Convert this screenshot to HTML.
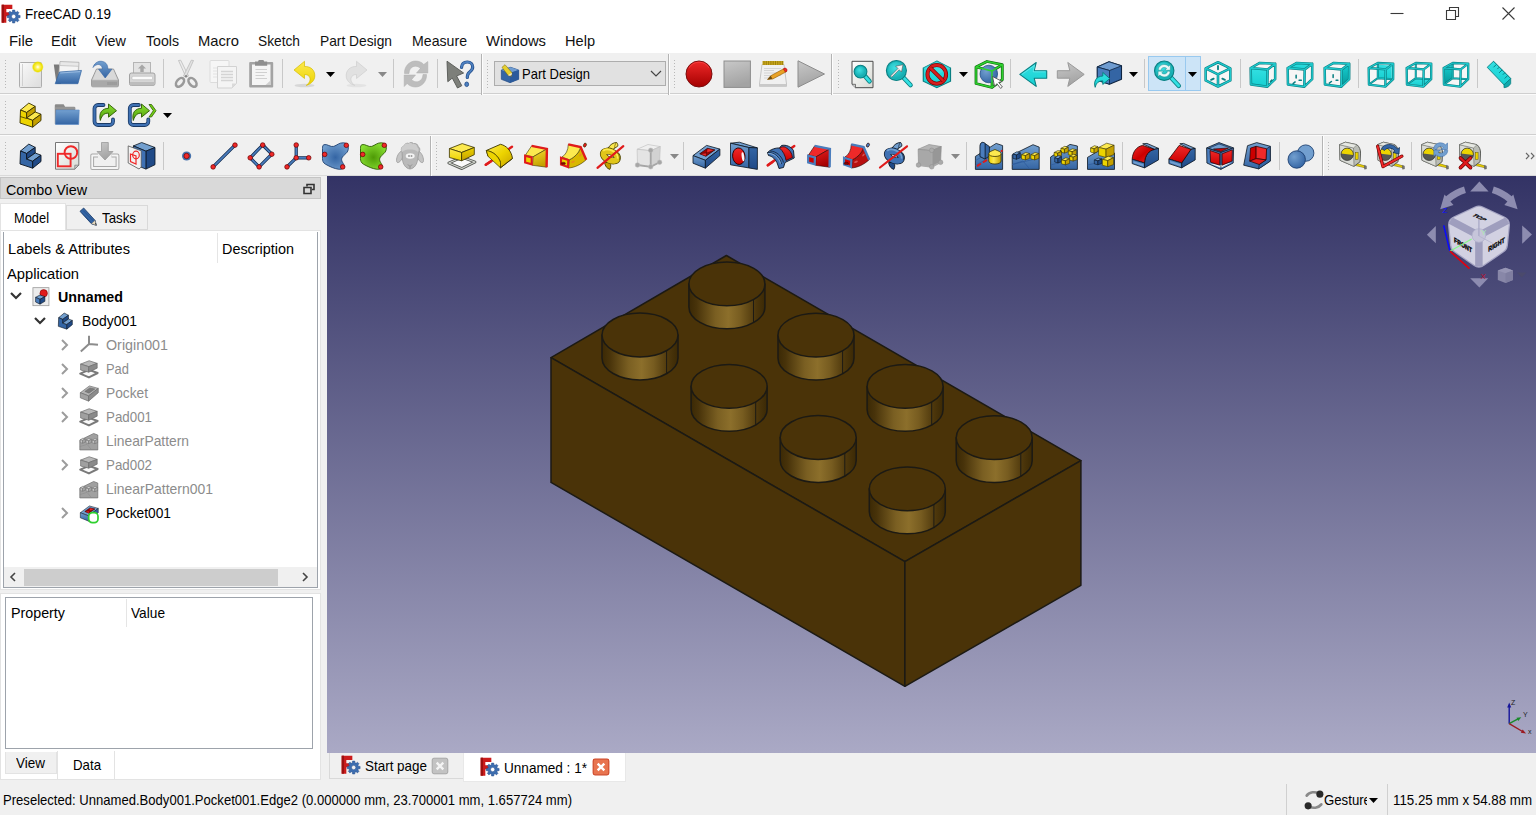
<!DOCTYPE html>
<html><head><meta charset="utf-8"><title>FreeCAD 0.19</title>
<style>
html,body{margin:0;padding:0}
body{width:1536px;height:815px;overflow:hidden;position:relative;background:#f0f0f0;font-family:"Liberation Sans", sans-serif;}
.t{position:absolute;white-space:nowrap;transform-origin:0 50%;}
.i{position:absolute;overflow:visible}
</style></head><body>
<svg width="0" height="0" style="position:absolute"><defs><linearGradient id="gB" x1="0" y1="0" x2="0" y2="1"><stop offset="0" stop-color="#729fcf"/><stop offset="1" stop-color="#3465a4"/></linearGradient><linearGradient id="gBd" x1="0" y1="0" x2="0" y2="1"><stop offset="0" stop-color="#3465a4"/><stop offset="1" stop-color="#204a87"/></linearGradient><linearGradient id="gBh" x1="0" y1="0" x2="1" y2="1"><stop offset="0" stop-color="#8fb4dc"/><stop offset="1" stop-color="#4a7ab8"/></linearGradient><linearGradient id="gY" x1="0" y1="0" x2="0" y2="1"><stop offset="0" stop-color="#fce94f"/><stop offset="1" stop-color="#edd400"/></linearGradient><linearGradient id="gYd" x1="0" y1="0" x2="0" y2="1"><stop offset="0" stop-color="#edd400"/><stop offset="1" stop-color="#c4a000"/></linearGradient><linearGradient id="gR" x1="0" y1="0" x2="0" y2="1"><stop offset="0" stop-color="#ef2929"/><stop offset="1" stop-color="#cc0000"/></linearGradient><linearGradient id="gRd" x1="0" y1="0" x2="0" y2="1"><stop offset="0" stop-color="#cc0000"/><stop offset="1" stop-color="#a40000"/></linearGradient><linearGradient id="gC" x1="0" y1="0" x2="0" y2="1"><stop offset="0" stop-color="#34e0e2"/><stop offset="1" stop-color="#16d0d2"/></linearGradient><linearGradient id="gCd" x1="0" y1="0" x2="0" y2="1"><stop offset="0" stop-color="#16d0d2"/><stop offset="1" stop-color="#06989a"/></linearGradient><linearGradient id="gG" x1="0" y1="0" x2="0" y2="1"><stop offset="0" stop-color="#8ae234"/><stop offset="1" stop-color="#4e9a06"/></linearGradient><linearGradient id="gGr" x1="0" y1="0" x2="0" y2="1"><stop offset="0" stop-color="#eeeeec"/><stop offset="1" stop-color="#babdb6"/></linearGradient><linearGradient id="gGrd" x1="0" y1="0" x2="0" y2="1"><stop offset="0" stop-color="#babdb6"/><stop offset="1" stop-color="#888a85"/></linearGradient><linearGradient id="gGrd2" x1="0" y1="0" x2="0.3" y2="1"><stop offset="0" stop-color="#c8c8c8"/><stop offset="1" stop-color="#a3a3a3"/></linearGradient><linearGradient id="gPap2" x1="0" y1="0" x2="1" y2="1"><stop offset="0" stop-color="#ffffff"/><stop offset="1" stop-color="#d8dad4"/></linearGradient><radialGradient id="gMag" cx="0.4" cy="0.35" r="0.7"><stop offset="0" stop-color="#3fe0e2"/><stop offset="1" stop-color="#12a8ac"/></radialGradient><linearGradient id="gYx" x1="0" y1="0" x2="1" y2="1"><stop offset="0" stop-color="#fce94f"/><stop offset="0.5" stop-color="#edd400"/><stop offset="1" stop-color="#c4a000"/></linearGradient><linearGradient id="gYh" x1="0" y1="0" x2="1" y2="0"><stop offset="0" stop-color="#edd400"/><stop offset="0.4" stop-color="#fce94f"/><stop offset="1" stop-color="#c4a000"/></linearGradient><linearGradient id="gRh" x1="0" y1="0" x2="1" y2="1"><stop offset="0" stop-color="#ef2929"/><stop offset="0.5" stop-color="#cc0000"/><stop offset="1" stop-color="#ef2929"/></linearGradient><linearGradient id="gY2" x1="0" y1="0" x2="0.3" y2="1"><stop offset="0" stop-color="#f6e030"/><stop offset="1" stop-color="#c4a000"/></linearGradient><linearGradient id="gR2" x1="0" y1="0" x2="0.3" y2="1"><stop offset="0" stop-color="#e82020"/><stop offset="1" stop-color="#a40000"/></linearGradient><linearGradient id="gPap" x1="0" y1="0" x2="1" y2="1"><stop offset="0" stop-color="#fafafa"/><stop offset="1" stop-color="#dcdcdc"/></linearGradient><linearGradient id="gRec" x1="0" y1="0" x2="0" y2="1"><stop offset="0" stop-color="#ef2929"/><stop offset="1" stop-color="#a40000"/></linearGradient><radialGradient id="gGlow" cx="0.5" cy="0.5" r="0.5"><stop offset="0" stop-color="#ffffff"/><stop offset="0.3" stop-color="#fff36b"/><stop offset="0.75" stop-color="#ece000"/><stop offset="1" stop-color="#e8dc00" stop-opacity="0"/></radialGradient><radialGradient id="gBall" cx="0.35" cy="0.35" r="0.7"><stop offset="0" stop-color="#729fcf"/><stop offset="1" stop-color="#3465a4"/></radialGradient><radialGradient id="gBlob" cx="0.5" cy="0.55" r="0.6"><stop offset="0" stop-color="#3465a4"/><stop offset="1" stop-color="#729fcf"/></radialGradient><radialGradient id="gBlobG" cx="0.5" cy="0.55" r="0.6"><stop offset="0" stop-color="#4e9a06"/><stop offset="1" stop-color="#8ae234"/></radialGradient></defs></svg>
<div style="position:absolute;left:0px;top:0px;width:1536px;height:53px;background:#fff;"></div>
<svg class="i" style="left:1.0px;top:4.0px" width="20" height="20" viewBox="0 0 30 30"><path d="M1 1h16v6.5H8v5h6.5v6H8V28H1z" fill="#cb1b1b"/><path d="M1 1h3.5v27H1z" fill="#9b1010"/><path d="M28.65 17.12L28.65 20.48L26.07 20.62L25.28 22.52L27.02 24.44L24.64 26.82L22.72 25.08L20.82 25.87L20.68 28.45L17.32 28.45L17.18 25.87L15.28 25.08L13.36 26.82L10.98 24.44L12.72 22.52L11.93 20.62L9.35 20.48L9.35 17.12L11.93 16.98L12.72 15.08L10.98 13.16L13.36 10.78L15.28 12.52L17.18 11.73L17.32 9.15L20.68 9.15L20.82 11.73L22.72 12.52L24.64 10.78L27.02 13.16L25.28 15.08L26.07 16.98zM15.70 18.80a3.3 3.3 0 1 0 6.6 0a3.3 3.3 0 1 0 -6.6 0z" fill="#3d6eb0" fill-rule="evenodd" stroke="#27508c" stroke-width=".8"/></svg>
<div class="t" style="left:25px;top:4.0px;height:20px;line-height:20px;font-size:15px;color:#000;transform:scaleX(0.8970);">FreeCAD 0.19</div>
<svg class="i" style="left:1380px;top:0" width="156" height="28" viewBox="0 0 156 28"><g stroke="#3a3a3a" stroke-width="1.1" fill="none"><path d="M10.5 13.5h13"/><path d="M66.5 10.5h9v9h-9z"/><path d="M69.5 10.5v-3h9v9h-3"/><path d="M122.5 7.5l12 12M134.5 7.5l-12 12"/></g></svg>
<div class="t" style="left:9px;top:30.5px;height:20px;line-height:20px;font-size:15px;color:#111;transform:scaleX(0.9929);">File</div>
<div class="t" style="left:51px;top:30.5px;height:20px;line-height:20px;font-size:15px;color:#111;transform:scaleX(0.9668);">Edit</div>
<div class="t" style="left:95px;top:30.5px;height:20px;line-height:20px;font-size:15px;color:#111;transform:scaleX(0.9612);">View</div>
<div class="t" style="left:146px;top:30.5px;height:20px;line-height:20px;font-size:15px;color:#111;transform:scaleX(0.9420);">Tools</div>
<div class="t" style="left:198px;top:30.5px;height:20px;line-height:20px;font-size:15px;color:#111;transform:scaleX(0.9835);">Macro</div>
<div class="t" style="left:258px;top:30.5px;height:20px;line-height:20px;font-size:15px;color:#111;transform:scaleX(0.9158);">Sketch</div>
<div class="t" style="left:320px;top:30.5px;height:20px;line-height:20px;font-size:15px;color:#111;transform:scaleX(0.9187);">Part Design</div>
<div class="t" style="left:412px;top:30.5px;height:20px;line-height:20px;font-size:15px;color:#111;transform:scaleX(0.9424);">Measure</div>
<div class="t" style="left:486px;top:30.5px;height:20px;line-height:20px;font-size:15px;color:#111;transform:scaleX(0.9859);">Windows</div>
<div class="t" style="left:565px;top:30.5px;height:20px;line-height:20px;font-size:15px;color:#111;transform:scaleX(0.9722);">Help</div>
<div style="position:absolute;left:0px;top:53px;width:1536px;height:124px;background:#f0f0f0;"></div>
<div style="position:absolute;left:0px;top:93px;width:1536px;height:1px;background:#cfcfcf;"></div>
<div style="position:absolute;left:0px;top:94px;width:1536px;height:1px;background:#fbfbfb;"></div>
<div style="position:absolute;left:0px;top:134px;width:1536px;height:1px;background:#cfcfcf;"></div>
<div style="position:absolute;left:0px;top:135px;width:1536px;height:1px;background:#fbfbfb;"></div>
<div style="position:absolute;left:0px;top:175px;width:1536px;height:1px;background:#dadada;"></div>
<div style="position:absolute;left:5px;top:60px;width:1px;height:28px;background:repeating-linear-gradient(#b8b8b8 0 1px,transparent 1px 3px)"></div>
<svg class="i" style="left:15.0px;top:59.0px" width="30" height="30" viewBox="0 0 30 30"><rect x="4.5" y="3.5" width="22" height="25" rx="1" fill="url(#gPap)" stroke="#adadad"/><path d="M7.5 5v22" stroke="#c8c8c8" stroke-width=".8"/><circle cx="22.8" cy="8" r="6" fill="url(#gGlow)"/></svg>
<svg class="i" style="left:52.0px;top:59.0px" width="30" height="30" viewBox="0 0 30 30"><path d="M1.8 5.5h5l1 1.5h3L9 25H4.5z" fill="#7a7a7a"/><path d="M8 2.5l19 .8-.5 10L7 15z" fill="#e8e8e8" stroke="#a8a8a8" stroke-width=".7"/><path d="M7.5 6.5l19 .8-.5 8L7 17z" fill="#f4f4f4" stroke="#b0b0b0" stroke-width=".6"/><path d="M7.5 13l22-1.6-3.6 13.3H3.2z" fill="url(#gB)" stroke="#3465a4" stroke-width=".7"/><path d="M8.2 14l20-1.4" stroke="#a5c3e6" stroke-width=".8"/></svg>
<svg class="i" style="left:90.0px;top:59.0px" width="30" height="30" viewBox="0 0 30 30"><path d="M6.5 10h17l5 11v5.5a1.3 1.3 0 0 1-1.3 1.3H2.8a1.3 1.3 0 0 1-1.3-1.3V21z" fill="#c9c9c9" stroke="#8b8b8b" stroke-width=".8"/><path d="M1.8 21.3h26.4v5.2a1 1 0 0 1-1 1H2.8a1 1 0 0 1-1-1z" fill="#a9a9a9"/><path d="M18 23v3M20 23v3M22 23v3M24 23v3M26 23v3" stroke="#8a8a8a" stroke-width=".8"/><path d="M6.8 10.8h16.4l4 9.6H2.8z" fill="#d9d9d9"/><path d="M3 8.5C4.5 3 10 .8 14.5 3.2c2.4 1.3 3.3 3.6 3.4 7h4L15.2 19 8.6 10.2h3.8c0-3-2.3-5.2-5-4.6C5.4 6 4 7 3 8.5z" fill="url(#gB)" stroke="#3465a4" stroke-width=".6"/></svg>
<svg class="i" style="left:127.0px;top:59.0px" width="30" height="30" viewBox="0 0 30 30"><rect x="6.5" y="3.5" width="17" height="12" fill="#e3e3e3" stroke="#b5b5b5"/><path d="M15 5.5l4 4h-2.3v3.5h-3.4V9.5H11z" fill="#a6a6a6"/><rect x="2.5" y="14" width="25.5" height="12.5" rx="2" fill="#d6d6d6" stroke="#a2a2a2"/><rect x="5" y="17.3" width="20.5" height="3.4" rx="1" fill="#fafafa" stroke="#b9b9b9" stroke-width=".6"/><path d="M3 23h24.5v2a1.5 1.5 0 0 1-1.5 1.5H4.5A1.500 1.500 0 0 1 3 25z" fill="#bdbdbd"/></svg>
<div style="position:absolute;left:163px;top:59px;width:1px;height:29px;background:#c8c8c8;"></div>
<svg class="i" style="left:171.0px;top:59.0px" width="30" height="30" viewBox="0 0 30 30"><path d="M7.5 1.5l2.2-.3L17.5 17l-2.6 1z" fill="#ececec" stroke="#b5b5b5" stroke-width=".7"/><path d="M22.5 1.500l-2.200-.3L12.500 17l2.600 1z" fill="#e2e2e2" stroke="#b5b5b5" stroke-width=".7"/><g fill="none" stroke="#9a9a9a" stroke-width="2.6"><ellipse cx="9" cy="23.300" rx="3.200" ry="5" transform="rotate(40 9 23.300)"/><ellipse cx="21.500" cy="23.300" rx="3.200" ry="5" transform="rotate(-40 21.500 23.300)"/></g><circle cx="15" cy="17.300" r="1.200" fill="#888"/></svg>
<svg class="i" style="left:209.0px;top:59.0px" width="30" height="30" viewBox="0 0 30 30"><rect x="1" y="1.500" width="19" height="22" rx="1" fill="#f6f6f6" stroke="#dcdcdc"/><path d="M4 9h8M4 12h8M4 15h8M4 18h8" stroke="#e2e2e2" stroke-width="1"/><path d="M8.500 7.500h19v17l-4.500 4.500H8.500z" fill="#f4f4f4" stroke="#d2d2d2"/><path d="M12 12.500h12M12 15.500h12M12 18.500h12M12 21.500h12" stroke="#d4d4d4" stroke-width="1.300"/><path d="M27.500 24.500h-4.500v4.500z" fill="#dadada"/></svg>
<svg class="i" style="left:246.0px;top:59.0px" width="30" height="30" viewBox="0 0 30 30"><rect x="3.200" y="3" width="24" height="25.500" rx="1" fill="#a3a3a3"/><rect x="6" y="5.500" width="18.500" height="20.500" fill="#f5f5f5"/><path d="M9 2.500h3l.8-1.500h4.600l.8 1.500h3v4.300H9z" fill="#8f8f8f"/><path d="M9.500 10.500h11.500M9.500 13.500h11.500M9.500 16.500h9M9.500 19.500h11.500" stroke="#d0d0d0" stroke-width="1.200"/><path d="M24.500 21.500v4.500h-5z" fill="#cfcfcf"/></svg>
<div style="position:absolute;left:282px;top:59px;width:1px;height:29px;background:#c8c8c8;"></div>
<svg class="i" style="left:289.0px;top:59.0px" width="30" height="30" viewBox="0 0 30 30"><ellipse cx="15.500" cy="26.500" rx="10" ry="1.800" fill="#000" opacity=".10"/><path d="M5 11L15.500 2.300v5.200c6.500-.3 10.500 4 10.300 9.500-.2 4.500-3.300 7.700-8.500 9.400 3.300-2.600 4.300-5.300 3.600-7.600-.7-2.200-2.700-3.300-5.400-3.300v4z" fill="url(#gY)" stroke="#d4bc00" stroke-width=".7"/></svg>
<svg class="i" style="left:325.5px;top:71.5px" width="9" height="5" viewBox="0 0 9 5"><path d="M0 0h9L4.5 5z" fill="#000"/></svg>
<svg class="i" style="left:342.0px;top:59.0px" width="30" height="30" viewBox="0 0 30 30"><ellipse cx="14.500" cy="26.500" rx="10" ry="1.800" fill="#000" opacity=".05"/><path d="M25 11L14.500 2.300v5.200C8 7.200 4 11.500 4.200 17c.2 4.500 3.300 7.700 8.500 9.400-3.300-2.600-4.300-5.300-3.600-7.600.7-2.200 2.700-3.300 5.400-3.300v4z" fill="#e1e1e1" stroke="#cfcfcf" stroke-width=".7"/></svg>
<svg class="i" style="left:377.5px;top:71.5px" width="9" height="5" viewBox="0 0 9 5"><path d="M0 0h9L4.5 5z" fill="#888"/></svg>
<div style="position:absolute;left:393px;top:59px;width:1px;height:29px;background:#c8c8c8;"></div>
<svg class="i" style="left:400.0px;top:59.0px" width="30" height="30" viewBox="0 0 30 30"><g fill="#bdbdbd" stroke="#adadad" stroke-width=".5"><path d="M4.5 14.500C4 8 9 2 15.500 2c3.500 0 6.300 1.300 8.300 3.500L27.800 2.500v11.500H16.500l3.800-4.500c-1.200-1.500-2.800-2.300-4.800-2.300-3.800 0-6.200 3-6.500 7.300z"/><path d="M26.500 15.500C27 22 22 28 15.500 28c-3.500 0-6.300-1.300-8.300-3.500L4.200 27.500V16h11.300l-3.800 4.500c1.200 1.500 2.800 2.300 4.800 2.300 3.800 0 6.200-3 6.500-7.300z"/></g></svg>
<div style="position:absolute;left:437px;top:59px;width:1px;height:29px;background:#c8c8c8;"></div>
<svg class="i" style="left:444.0px;top:59.0px" width="30" height="30" viewBox="0 0 30 30"><path d="M3 2.200l.8 20.500 4.500-3.600L13.500 29l4.300-2.300-5.200-9.700 7-3z" fill="#7d7f7a" stroke="#555753" stroke-width=".9" stroke-linejoin="round"/><path d="M17.500 8.500c.3-3.500 2.500-5.500 5.800-5.500 3.200 0 5.400 2 5.400 5 0 2.500-1.400 3.800-3 5-1.600 1.200-2.400 2.300-2.400 5.500" fill="none" stroke="#204a87" stroke-width="3.200" stroke-linecap="round"/><path d="M17.500 8.500c.3-3.500 2.500-5.500 5.800-5.500 3.200 0 5.400 2 5.400 5 0 2.500-1.400 3.800-3 5-1.600 1.200-2.400 2.300-2.400 5.500" fill="none" stroke="#4d80c0" stroke-width="1.800" stroke-linecap="round"/><ellipse cx="22.700" cy="25.300" rx="1.900" ry="2.300" fill="#4d80c0" stroke="#204a87" stroke-width=".8"/></svg>
<div style="position:absolute;left:481px;top:54px;width:1px;height:41px;background:#b4b4b4;"></div>
<div style="position:absolute;left:482px;top:54px;width:1px;height:41px;background:#fdfdfd;"></div>
<div style="position:absolute;left:487px;top:60px;width:1px;height:28px;background:repeating-linear-gradient(#b8b8b8 0 1px,transparent 1px 3px)"></div>
<div style="position:absolute;left:494px;top:61px;width:172px;height:25px;background:#e1e1e1;border:1px solid #adadad;box-sizing:border-box"></div>
<svg class="i" style="left:499.5px;top:63.5px" width="20" height="20" viewBox="0 0 30 30"><path d="M2 9l14-4 12 4v14l-13 5-13-5z" fill="#3465a4" stroke="#1d4580" stroke-width="1"/><path d="M2 9l13 4.500 13-4.500-12-4z" fill="#6f9cd0"/><path d="M15 13.500V28l13-5V9z" fill="#2a5a9c"/><path d="M3 5l4.500-4L18 13l-1 5.500-5-1.500z" fill="#e6cf2e" stroke="#7a6a00" stroke-width=".8"/><path d="M12 17l5 1.500 1-5.500z" fill="#f3ead0"/><path d="M15.500 17.800l1.500.7.400-2z" fill="#222"/></svg>
<div class="t" style="left:522px;top:64.0px;height:20px;line-height:20px;font-size:15px;color:#000;transform:scaleX(0.8676);">Part Design</div>
<svg class="i" style="left:650px;top:70px" width="12" height="7" viewBox="0 0 12 7"><path d="M1 1l5 5 5-5" stroke="#444" stroke-width="1.2" fill="none"/></svg>
<div style="position:absolute;left:668px;top:54px;width:1px;height:41px;background:#b4b4b4;"></div>
<div style="position:absolute;left:669px;top:54px;width:1px;height:41px;background:#fdfdfd;"></div>
<div style="position:absolute;left:674px;top:60px;width:1px;height:28px;background:repeating-linear-gradient(#b8b8b8 0 1px,transparent 1px 3px)"></div>
<svg class="i" style="left:684.0px;top:59.0px" width="30" height="30" viewBox="0 0 30 30"><circle cx="15" cy="15" r="13" fill="url(#gRec)" stroke="#7a0d0d" stroke-width="1"/><path d="M5 9a11.500 11.500 0 0 1 20 0" stroke="#f55" stroke-width="1" fill="none" opacity=".5"/></svg>
<svg class="i" style="left:722.0px;top:59.0px" width="30" height="30" viewBox="0 0 30 30"><rect x="2" y="2" width="26.400" height="26.400" fill="url(#gGrd2)" stroke="#8d8d8d" stroke-width="1"/></svg>
<svg class="i" style="left:758.0px;top:59.0px" width="30" height="30" viewBox="0 0 30 30"><path d="M4 5.500h22l2.500 19.500v2.300H1.500V25z" fill="#f0f0f0" stroke="#b9b9b9" stroke-width=".8"/><path d="M1.500 25h27v2.300h-27z" fill="#c9c9c9"/><path d="M4.500 2h21v4h-21z" fill="#c9a820"/><path d="M6 2v4M8.300 2v4M10.600 2v4M12.900 2v4M15.200 2v4M17.500 2v4M19.800 2v4M22.100 2v4M24.400 2v4" stroke="#8a7000" stroke-width=".7"/><path d="M6 9.500h17M6 11.500h10M6 14h17M6 16.500h17M6 19h10" stroke="#d0d0d0" stroke-width=".9"/><path d="M9.500 20.500l3.200-3.700 14-7.600 2 3.300-14 7.500z" fill="#e9a227" stroke="#8f5902" stroke-width=".6"/><path d="M25.800 9.700a1.900 1.900 0 0 1 2.700 2.700l-1.200.7-2-3.300z" fill="#ef2929" stroke="#a40000" stroke-width=".5"/><path d="M9.500 20.500l3.200-3.700 1.700 3z" fill="#6b4a12"/></svg>
<svg class="i" style="left:796.0px;top:59.0px" width="30" height="30" viewBox="0 0 30 30"><path d="M2 1.800L28.500 15 2 28.200z" fill="url(#gGrd2)" stroke="#8d8d8d" stroke-width="1" stroke-linejoin="round"/></svg>
<div style="position:absolute;left:831px;top:54px;width:1px;height:41px;background:#b4b4b4;"></div>
<div style="position:absolute;left:832px;top:54px;width:1px;height:41px;background:#fdfdfd;"></div>
<div style="position:absolute;left:838px;top:60px;width:1px;height:28px;background:repeating-linear-gradient(#b8b8b8 0 1px,transparent 1px 3px)"></div>
<svg class="i" style="left:847.0px;top:59.0px" width="30" height="30" viewBox="0 0 30 30"><path d="M5 2.300h21v26.400H8.500L5 25.300z" fill="url(#gPap2)" stroke="#4a4a4a" stroke-width="1"/><path d="M5 25.300h3.500v3.400" fill="#ccc" stroke="#4a4a4a" stroke-width=".7"/><path d="M18.0 17.1L22.5 22.3" stroke="#0a7f82" stroke-width="4.600" stroke-linecap="round"/><path d="M18.0 17.1L22.5 22.3" stroke="#34e0e2" stroke-width="2.800" stroke-linecap="round"/><circle cx="13.5" cy="12.6" r="6.4" fill="#18b4b8" stroke="#0a7f82" stroke-width="1.100"/><circle cx="13.5" cy="12.6" r="4.800000000000001" fill="url(#gMag)"/></svg>
<svg class="i" style="left:885.0px;top:59.0px" width="30" height="30" viewBox="0 0 30 30"><path d="M18.4 18.5L25.5 26" stroke="#0a7f82" stroke-width="4.600" stroke-linecap="round"/><path d="M18.4 18.5L25.5 26" stroke="#34e0e2" stroke-width="2.800" stroke-linecap="round"/><circle cx="11.4" cy="11.5" r="10" fill="#18b4b8" stroke="#0a7f82" stroke-width="1.100"/><circle cx="11.4" cy="11.5" r="8.4" fill="url(#gMag)"/><path d="M5.500 17l7.500-7.500-2.300-2.300 7.300-1.500-1.500 7.300-2.300-2.300-7.500 7.500z" fill="#f4f4f4" stroke="#555" stroke-width=".6"/></svg>
<svg class="i" style="left:922.0px;top:59.0px" width="30" height="30" viewBox="0 0 30 30"><path d="M14.800 2.100L28.500 9v13.200L14.800 28.700 1.300 22.200V9z" fill="url(#gC)" stroke="#0a7f82" stroke-width="1.200"/><path d="M14.800 2.100L28.500 9 14.800 15.500 1.300 9z" fill="#4fe6e8" opacity=".55"/><circle cx="14.800" cy="15.400" r="9.300" fill="none" stroke="#7a0a0a" stroke-width="4"/><circle cx="14.800" cy="15.400" r="9.300" fill="none" stroke="#d81e1e" stroke-width="2.600"/><path d="M8.300 8.900l13 13" stroke="#7a0a0a" stroke-width="4"/><path d="M8.300 8.900l13 13" stroke="#d81e1e" stroke-width="2.600"/></svg>
<svg class="i" style="left:958.5px;top:71.5px" width="9" height="5" viewBox="0 0 9 5"><path d="M0 0h9L4.5 5z" fill="#000"/></svg>
<svg class="i" style="left:974.0px;top:59.0px" width="30" height="30" viewBox="0 0 30 30"><g fill="none" stroke="#0a6a0a" stroke-width="2.800" stroke-linejoin="round"><path d="M2 8l11-5.500 15.300 3.200v15L18 28.500 2 24.500z"/><path d="M2 8l16 4 10.300-6.300M18 12v16.500"/></g><circle cx="14.800" cy="15" r="8.800" fill="url(#gBall)" stroke="#1d4580" stroke-width=".7"/><g fill="none" stroke="#2fd02f" stroke-width="1.500" stroke-linejoin="round"><path d="M2 8l11-5.500 15.300 3.200v15L18 28.500 2 24.500z"/><path d="M2 8l16 4 10.300-6.300M18 12v16.500"/></g><path d="M18.500 17.500l9.800 5-3.600.9 3.700 4.600-1.800 1.400-3.700-4.700-2.300 2.800z" fill="#fff" stroke="#444" stroke-width=".8" stroke-linejoin="round"/></svg>
<div style="position:absolute;left:1010px;top:59px;width:1px;height:29px;background:#c8c8c8;"></div>
<svg class="i" style="left:1019.0px;top:59.0px" width="30" height="30" viewBox="0 0 30 30"><path d="M.8 15.400L17.200 3.500l-2 8.200h12.500v7.500H15.200l2 8.200z" fill="url(#gC)" stroke="#0a7f82" stroke-width="1.100" stroke-linejoin="round"/><path d="M3 15.400L15.500 6.300l-1.300 6.500h12.300" stroke="#7af0f2" stroke-width=".8" fill="none" opacity=".8"/></svg>
<svg class="i" style="left:1055.0px;top:59.0px" width="30" height="30" viewBox="0 0 30 30"><path d="M29.200 15.400L12.800 3.500l2 8.200H2.300v7.500h12.500l-2 8.200z" fill="url(#gGrd2)" stroke="#999" stroke-width="1" stroke-linejoin="round"/></svg>
<svg class="i" style="left:1093.0px;top:59.0px" width="30" height="30" viewBox="0 0 30 30"><path d="M4.300 8L16 2.800l12.500 4v13.500L16.500 25.200 4.300 21.300z" fill="#3465a4" stroke="#0f2440" stroke-width="1.100" stroke-linejoin="round"/><path d="M4.300 8L16 2.800l12.500 4L16.500 11.500z" fill="#6f9cd0" stroke="#0f2440" stroke-width=".8"/><path d="M4.300 8l12.200 3.500v13.700L4.300 21.300z" fill="#4a7dbd" stroke="#0f2440" stroke-width=".8"/><path d="M2.200 28.300C.3 22 3.500 17.300 9.800 17v-3.600l7 6.200-7 5.800v-3.500c-4-.2-6.600 2-7.600 6.400z" fill="url(#gC)" stroke="#0a7f82" stroke-width="1" stroke-linejoin="round"/></svg>
<svg class="i" style="left:1128.5px;top:71.5px" width="9" height="5" viewBox="0 0 9 5"><path d="M0 0h9L4.5 5z" fill="#000"/></svg>
<div style="position:absolute;left:1144px;top:59px;width:1px;height:29px;background:#c8c8c8;"></div>
<div style="position:absolute;left:1148px;top:56px;width:53px;height:35px;background:#cce4f7;border:1px solid #99c9ef;box-sizing:border-box"></div>
<div style="position:absolute;left:1185px;top:57px;width:1px;height:33px;background:#99c9ef;"></div>
<svg class="i" style="left:1152.0px;top:59.0px" width="30" height="30" viewBox="0 0 30 30"><path d="M19.0 18.5L26.7 26.8" stroke="#0a7f82" stroke-width="4.600" stroke-linecap="round"/><path d="M19.0 18.5L26.7 26.8" stroke="#34e0e2" stroke-width="2.800" stroke-linecap="round"/><circle cx="12.2" cy="11.7" r="9.7" fill="#18b4b8" stroke="#0a7f82" stroke-width="1.100"/><circle cx="12.2" cy="11.7" r="8.1" fill="url(#gMag)"/><g fill="#eaf8f8" stroke="#0a7f82" stroke-width=".4"><path d="M6.200 11C6.500 7.500 9 5.500 12.200 5.500c1.800 0 3.300.7 4.300 1.800l1.800-1.500v5.400h-5.400l1.800-1.800c-.7-.7-1.500-1-2.500-1-1.900 0-3.100 1.200-3.300 3z"/><path d="M18.200 12.400c-.3 3.500-2.800 5.500-6 5.500-1.800 0-3.300-.7-4.300-1.800l-1.800 1.500v-5.400h5.400l-1.800 1.800c.7.700 1.500 1 2.500 1 1.900 0 3.100-1.200 3.300-3z"/></g></svg>
<svg class="i" style="left:1187.5px;top:71.5px" width="9" height="5" viewBox="0 0 9 5"><path d="M0 0h9L4.5 5z" fill="#000"/></svg>
<svg class="i" style="left:1203.0px;top:59.0px" width="30" height="30" viewBox="0 0 30 30"><g transform="translate(15 15) scale(0.92) translate(-15 -15)"><path d="M15 2.200L28.400 8.800V22L15 28.600 1.600 22V8.800z" fill="#f6f6f6"/><path d="M15 2.200L28.400 8.800V22L15 28.600 1.600 22V8.800zM1.600 8.800L15 15.400 28.400 8.800M15 15.400v13.200" fill="none" stroke="#0a7f82" stroke-width="2.8" stroke-linejoin="round"/><path d="M15 2.200L28.400 8.800V22L15 28.600 1.600 22V8.800zM1.600 8.800L15 15.400 28.400 8.800M15 15.400v13.200" fill="none" stroke="#1fc8cc" stroke-width="1.4999999999999998" stroke-linejoin="round"/><g stroke="#0a7f82" stroke-width="2" stroke-linecap="round"><path d="M15 6.300v3.600M7.500 21.300l2.800-1.300M22.500 21.300l-2.800-1.300"/></g></g></svg>
<div style="position:absolute;left:1240px;top:59px;width:1px;height:29px;background:#c8c8c8;"></div>
<svg class="i" style="left:1248.0px;top:59.0px" width="30" height="30" viewBox="0 0 30 30"><g transform="translate(15 15.3) scale(0.9) translate(-15 -15)"><path d="M1.300 8L11.400 2.400 28.600 3.200 20.200 9.600z" fill="#f6f6f6"/><path d="M20.200 9.600L28.600 3.200 28.500 20.400 19.800 28.700z" fill="#f6f6f6"/><path d="M1.300 8L20.200 9.600 19.800 28.700 1.600 26.400z" fill="url(#gC)"/><path d="M1.300 8L20.200 9.600 19.800 28.700 1.600 26.400zM1.300 8L11.400 2.400 28.600 3.200 20.200 9.600zM20.200 9.600L28.600 3.200 28.500 20.400 19.800 28.700z" fill="none" stroke="#0a7f82" stroke-width="2.8" stroke-linejoin="round"/><path d="M1.300 8L20.200 9.600 19.800 28.700 1.600 26.400zM1.300 8L11.400 2.400 28.600 3.200 20.200 9.600zM20.200 9.600L28.600 3.200 28.500 20.400 19.800 28.700z" fill="none" stroke="#1fc8cc" stroke-width="1.4999999999999998" stroke-linejoin="round"/><g stroke="#0a7f82" stroke-width="1.700" stroke-linecap="round"><path d="M24.800 21.500l-1.500 1.500"/></g></g></svg>
<svg class="i" style="left:1285.0px;top:59.0px" width="30" height="30" viewBox="0 0 30 30"><g transform="translate(15 15.3) scale(0.9) translate(-15 -15)"><path d="M1.300 8L11.400 2.400 28.600 3.200 20.200 9.600z" fill="url(#gC)"/><path d="M20.200 9.600L28.600 3.200 28.500 20.400 19.800 28.700z" fill="#f6f6f6"/><path d="M1.300 8L20.200 9.600 19.800 28.700 1.600 26.400z" fill="#f6f6f6"/><path d="M1.300 8L20.200 9.600 19.800 28.700 1.600 26.400zM1.300 8L11.400 2.400 28.600 3.200 20.200 9.600zM20.200 9.600L28.600 3.200 28.500 20.400 19.800 28.700z" fill="none" stroke="#0a7f82" stroke-width="2.8" stroke-linejoin="round"/><path d="M1.300 8L20.200 9.600 19.800 28.700 1.600 26.400zM1.300 8L11.400 2.400 28.600 3.200 20.200 9.600zM20.200 9.600L28.600 3.200 28.500 20.400 19.800 28.700z" fill="none" stroke="#1fc8cc" stroke-width="1.4999999999999998" stroke-linejoin="round"/><g stroke="#0a7f82" stroke-width="1.700" stroke-linecap="round"><path d="M10.700 16v3M7.300 25.300l2.300-1.800M14 21.500h2.500"/></g></g></svg>
<svg class="i" style="left:1322.0px;top:59.0px" width="30" height="30" viewBox="0 0 30 30"><g transform="translate(15 15.3) scale(0.9) translate(-15 -15)"><path d="M1.300 8L11.400 2.400 28.600 3.200 20.200 9.600z" fill="#f6f6f6"/><path d="M20.200 9.600L28.600 3.200 28.500 20.400 19.800 28.700z" fill="url(#gCd)"/><path d="M1.300 8L20.200 9.600 19.800 28.700 1.600 26.400z" fill="#f6f6f6"/><path d="M1.300 8L20.200 9.600 19.800 28.700 1.600 26.400zM1.300 8L11.400 2.400 28.600 3.200 20.200 9.600zM20.200 9.600L28.600 3.200 28.500 20.400 19.800 28.700z" fill="none" stroke="#0a7f82" stroke-width="2.8" stroke-linejoin="round"/><path d="M1.300 8L20.200 9.600 19.800 28.700 1.600 26.400zM1.300 8L11.400 2.400 28.600 3.200 20.200 9.600zM20.200 9.600L28.600 3.200 28.500 20.400 19.800 28.700z" fill="none" stroke="#1fc8cc" stroke-width="1.4999999999999998" stroke-linejoin="round"/><g stroke="#0a7f82" stroke-width="1.700" stroke-linecap="round"><path d="M10.700 15.500v3M6.500 24.800l2.300-1.800M14 21.500h2"/></g></g></svg>
<div style="position:absolute;left:1358px;top:59px;width:1px;height:29px;background:#c8c8c8;"></div>
<svg class="i" style="left:1366.0px;top:59.0px" width="30" height="30" viewBox="0 0 30 30"><g transform="translate(15 15.3) scale(0.9) translate(-15 -15)"><path d="M1.300 8L20.200 9.600 19.800 28.700 1.600 26.400zM1.300 8L11.400 2.400 28.600 3.200 20.200 9.600zM20.200 9.600L28.600 3.200 28.500 20.400 19.800 28.700z" fill="#f6f6f6"/><path d="M11.400 4.500L27 5.200V20L11.400 19z" fill="url(#gC)"/><path d="M11.400 2.400V19.300L1.600 26.400M11.400 19.300L28.500 20.400" fill="none" stroke="#0a7f82" stroke-width="2.2" stroke-linejoin="round"/><path d="M11.400 2.400V19.300L1.600 26.400M11.400 19.300L28.500 20.400" fill="none" stroke="#1fc8cc" stroke-width="0.9000000000000001" stroke-linejoin="round"/><path d="M1.300 8L20.200 9.600 19.800 28.700 1.600 26.400zM1.300 8L11.400 2.400 28.600 3.200 20.200 9.600zM20.200 9.600L28.600 3.200 28.500 20.400 19.800 28.700z" fill="none" stroke="#0a7f82" stroke-width="2.6" stroke-linejoin="round"/><path d="M1.300 8L20.200 9.600 19.800 28.700 1.600 26.400zM1.300 8L11.400 2.400 28.600 3.200 20.200 9.600zM20.200 9.600L28.600 3.200 28.500 20.400 19.800 28.700z" fill="none" stroke="#1fc8cc" stroke-width="1.3" stroke-linejoin="round"/></g></svg>
<svg class="i" style="left:1404.0px;top:59.0px" width="30" height="30" viewBox="0 0 30 30"><g transform="translate(15 15.3) scale(0.9) translate(-15 -15)"><path d="M1.300 8L20.200 9.600 19.800 28.700 1.600 26.400zM1.300 8L11.400 2.400 28.600 3.200 20.200 9.600zM20.200 9.600L28.600 3.200 28.500 20.400 19.800 28.700z" fill="#f6f6f6"/><path d="M2.500 25.800L11.400 19.500 27.500 20.500 19.800 27.800z" fill="url(#gC)"/><path d="M11.400 2.400V19.300L1.600 26.400M11.400 19.300L28.500 20.400" fill="none" stroke="#0a7f82" stroke-width="2.2" stroke-linejoin="round"/><path d="M11.400 2.400V19.300L1.600 26.400M11.400 19.300L28.500 20.400" fill="none" stroke="#1fc8cc" stroke-width="0.9000000000000001" stroke-linejoin="round"/><path d="M1.300 8L20.200 9.600 19.800 28.700 1.600 26.400zM1.300 8L11.400 2.400 28.600 3.200 20.200 9.600zM20.200 9.600L28.600 3.200 28.500 20.400 19.800 28.700z" fill="none" stroke="#0a7f82" stroke-width="2.6" stroke-linejoin="round"/><path d="M1.300 8L20.200 9.600 19.800 28.700 1.600 26.400zM1.300 8L11.400 2.400 28.600 3.200 20.200 9.600zM20.200 9.600L28.600 3.200 28.500 20.400 19.800 28.700z" fill="none" stroke="#1fc8cc" stroke-width="1.3" stroke-linejoin="round"/></g></svg>
<svg class="i" style="left:1441.0px;top:59.0px" width="30" height="30" viewBox="0 0 30 30"><g transform="translate(15 15.3) scale(0.9) translate(-15 -15)"><path d="M1.300 8L20.200 9.600 19.800 28.700 1.600 26.400zM1.300 8L11.400 2.400 28.600 3.200 20.200 9.600zM20.200 9.600L28.600 3.200 28.500 20.400 19.800 28.700z" fill="#f6f6f6"/><path d="M2 8.500L11.400 3.500V19.500L2.300 25.800z" fill="url(#gCd)"/><path d="M11.400 2.400V19.300L1.600 26.400M11.400 19.300L28.500 20.400" fill="none" stroke="#0a7f82" stroke-width="2.2" stroke-linejoin="round"/><path d="M11.400 2.400V19.300L1.600 26.400M11.400 19.300L28.500 20.400" fill="none" stroke="#1fc8cc" stroke-width="0.9000000000000001" stroke-linejoin="round"/><path d="M1.300 8L20.200 9.600 19.800 28.700 1.600 26.400zM1.300 8L11.400 2.400 28.600 3.200 20.200 9.600zM20.200 9.600L28.600 3.200 28.500 20.400 19.800 28.700z" fill="none" stroke="#0a7f82" stroke-width="2.6" stroke-linejoin="round"/><path d="M1.300 8L20.200 9.600 19.800 28.700 1.600 26.400zM1.300 8L11.400 2.400 28.600 3.200 20.200 9.600zM20.200 9.600L28.600 3.200 28.500 20.400 19.800 28.700z" fill="none" stroke="#1fc8cc" stroke-width="1.3" stroke-linejoin="round"/></g></svg>
<div style="position:absolute;left:1477px;top:59px;width:1px;height:29px;background:#c8c8c8;"></div>
<svg class="i" style="left:1484.0px;top:59.0px" width="30" height="30" viewBox="0 0 30 30"><path d="M9.500 2.300L26.700 19.500V24.500C25.500 27 23 28.500 20 28.700V25.800z" fill="#10a8ac" stroke="#0a7f82" stroke-width=".8" stroke-linejoin="round"/><path d="M9.500 2.300L26.700 19.500 20 25.800 3.200 8.300z" fill="url(#gC)" stroke="#0a7f82" stroke-width=".9" stroke-linejoin="round"/><path d="M12.500 5.300l-3 3M15.300 8.100l-2 2M18.100 10.900l-3 3M20.900 13.700l-2 2M23.700 16.500l-3 3" stroke="#0a7f82" stroke-width="1"/></svg>
<div style="position:absolute;left:5px;top:101px;width:1px;height:28px;background:repeating-linear-gradient(#b8b8b8 0 1px,transparent 1px 3px)"></div>
<svg class="i" style="left:15.0px;top:100.0px" width="30" height="30" viewBox="0 0 30 30"><g stroke="#3a3200" stroke-width=".9" stroke-linejoin="round"><path d="M5.500 10L13.800 3.100 20.200 6.400 11.600 12.500z" fill="#fce94f"/><path d="M5.500 10L11.600 12.500V18L17.700 20.200V27.200L5 23z" fill="#edd400"/><path d="M11.600 12.500L20.200 6.400V12L11.600 18z" fill="#c4a000"/><path d="M11.600 18L20.200 12 26 14.200 17.700 20.200z" fill="#fce94f"/><path d="M17.700 20.200L26 14.200V20.500L17.700 27.200z" fill="#c4a000"/></g><path d="M5.200 16.500L11.600 18.500" stroke="#3a3200" stroke-width=".8"/></svg>
<svg class="i" style="left:51.0px;top:100.0px" width="30" height="30" viewBox="0 0 30 30"><path d="M3.800 5.500a1.300 1.300 0 0 1 1.300-1.300h7.500l1.500 2.500h9a1.200 1.200 0 0 1 1.200 1.200V24H3.800z" fill="#8a8a8a"/><path d="M3.800 8h20.500" stroke="#a5a5a5" stroke-width=".8"/><path d="M4.500 24.500l.5-14.500h23.200l-.5 14.500z" fill="url(#gB)" stroke="#5a8ac6" stroke-width=".6"/></svg>
<svg class="i" style="left:89.0px;top:100.0px" width="30" height="30" viewBox="0 0 30 30"><path d="M14.5 5H9a3.500 3.500 0 0 0-3.500 3.500V21.500a3.500 3.500 0 0 0 3.500 3.500H20.5a3.500 3.500 0 0 0 3.500-3.500V19.500" fill="none" stroke="#1a3a66" stroke-width="3.800" stroke-linecap="round"/><path d="M14.5 5H9a3.500 3.500 0 0 0-3.500 3.500V21.500a3.500 3.500 0 0 0 3.500 3.500H20.5a3.500 3.500 0 0 0 3.500-3.500V19.500" fill="none" stroke="#3f71b3" stroke-width="2.200" stroke-linecap="round"/><path d="M11.3 20.500C9.5 13 13 8.500 19.5 8.300V4l8 6.700-8 6.500v-4c-4-.2-6.500 1.800-8.200 7.300z" fill="url(#gG)" stroke="#2d5a00" stroke-width=".9" stroke-linejoin="round"/></svg>
<svg class="i" style="left:127.0px;top:100.0px" width="30" height="30" viewBox="0 0 30 30"><path d="M11.8 5H6.3a3.500 3.500 0 0 0-3.500 3.500V21.500a3.500 3.500 0 0 0 3.500 3.500H17.8a3.500 3.500 0 0 0 3.500-3.500V19.500" fill="none" stroke="#1a3a66" stroke-width="3.800" stroke-linecap="round"/><path d="M11.8 5H6.3a3.500 3.500 0 0 0-3.500 3.500V21.500a3.500 3.500 0 0 0 3.500 3.500H17.8a3.500 3.500 0 0 0 3.500-3.500V19.500" fill="none" stroke="#3f71b3" stroke-width="2.200" stroke-linecap="round"/><path d="M6.300000000000001 20.500C4.5 13 8 8.500 14.5 8.300V4l8 6.700-8 6.500v-4c-4-.2-6.500 1.800-8.200 7.300z" fill="url(#gG)" stroke="#2d5a00" stroke-width=".9" stroke-linejoin="round"/><path d="M22 4.500h2.500l4.500 6.200-4.500 6.300H22l4.300-6.300z" fill="#73d216" stroke="#2d5a00" stroke-width=".8" stroke-linejoin="round"/></svg>
<svg class="i" style="left:163.0px;top:112.5px" width="9" height="5" viewBox="0 0 9 5"><path d="M0 0h9L4.5 5z" fill="#000"/></svg>
<div style="position:absolute;left:5px;top:142px;width:1px;height:28px;background:repeating-linear-gradient(#b8b8b8 0 1px,transparent 1px 3px)"></div>
<svg class="i" style="left:15.0px;top:141.0px" width="30" height="30" viewBox="0 0 30 30"><g stroke="#0b1521" stroke-width=".9" stroke-linejoin="round"><path d="M5.500 10L13.800 3.100 20.200 6.400 11.600 12.500z" fill="#729fcf"/><path d="M5.500 10L11.600 12.500V18L17.700 20.200V27.200L5 23z" fill="#3465a4"/><path d="M11.600 12.500L20.200 6.400V12L11.600 18z" fill="#204a87"/><path d="M11.600 18L20.200 12 26 14.200 17.700 20.200z" fill="#729fcf"/><path d="M17.700 20.200L26 14.200V20.500L17.700 27.200z" fill="#204a87"/></g></svg>
<svg class="i" style="left:52.0px;top:141.0px" width="30" height="30" viewBox="0 0 30 30"><path d="M3.500 1.500h23.300v22.700l-4 4H3.500z" fill="url(#gPap2)" stroke="#777" stroke-width="1"/><path d="M26.800 24.200h-4v4z" fill="#c8c8c8" stroke="#777" stroke-width=".7"/><rect x="5.800" y="12.800" width="12.800" height="12.500" fill="none" stroke="#ef2929" stroke-width="1.900"/><circle cx="18.900" cy="11.500" r="6.300" fill="none" stroke="#ef2929" stroke-width="1.900"/></svg>
<svg class="i" style="left:90.0px;top:141.0px" width="30" height="30" viewBox="0 0 30 30"><path d="M8 14.500H2.200v12.500H27.500V14.500H21.500" fill="none" stroke="#a8a8a8" stroke-width="3.800" stroke-linejoin="round"/><path d="M8 14.500H2.200v12.500H27.500V14.500H21.500" fill="none" stroke="#f5f5f5" stroke-width="1.800" stroke-linejoin="round"/><path d="M11.500 1.500h6.800v9h4.700L15 19 7 10.500h4.500z" fill="url(#gGrd2)" stroke="#9a9a9a" stroke-width=".8" stroke-linejoin="round"/></svg>
<svg class="i" style="left:127.0px;top:141.0px" width="30" height="30" viewBox="0 0 30 30"><path d="M6.400 4.900L14.700 1.500 28 6.500 18.900 10.200z" fill="#729fcf" stroke="#0b1521" stroke-width=".8" stroke-linejoin="round"/><path d="M18.900 10.200L28 6.500V23.700L18.900 28.100z" fill="#204a87" stroke="#0b1521" stroke-width=".8" stroke-linejoin="round"/><path d="M6.400 4.900L18.900 10.200V28.100L6.400 23z" fill="#3f71b3" stroke="#0b1521" stroke-width=".8" stroke-linejoin="round"/><path d="M1.200 4.900L14.200 9.800V26L12 28 1.200 22z" fill="#f2f2f2" stroke="#555" stroke-width=".8" stroke-linejoin="round"/><path d="M3.500 13l5.500 2v8l-5.500-2.500z" fill="none" stroke="#ef2929" stroke-width="1.200"/><ellipse cx="9" cy="14" rx="3.300" ry="3.800" fill="none" stroke="#ef2929" stroke-width="1.200"/></svg>
<div style="position:absolute;left:163px;top:142px;width:1px;height:28px;background:#c8c8c8;"></div>
<svg class="i" style="left:172.0px;top:141.0px" width="30" height="30" viewBox="0 0 30 30"><circle cx="14.600" cy="15" r="4.600" fill="#3465a4" opacity=".9"/><circle cx="14.6" cy="15" r="2.7" fill="#ef2929" stroke="#6a0000" stroke-width=".7"/></svg>
<svg class="i" style="left:208.5px;top:141.0px" width="30" height="30" viewBox="0 0 30 30"><path d="M4.100 25.900L26 4.100" fill="none" stroke="#0f2a50" stroke-width="3.200" stroke-linecap="round" stroke-linejoin="round"/><path d="M4.100 25.900L26 4.100" fill="none" stroke="#4a7dbd" stroke-width="1.700" stroke-linecap="round" stroke-linejoin="round"/><circle cx="4.1" cy="25.9" r="2.3" fill="#ef2929" stroke="#6a0000" stroke-width=".7"/><circle cx="26" cy="4.1" r="2.3" fill="#ef2929" stroke="#6a0000" stroke-width=".7"/></svg>
<svg class="i" style="left:246.0px;top:141.0px" width="30" height="30" viewBox="0 0 30 30"><path d="M16.700 4L25.800 13.200 13.100 25.900 4.200 16.800z" fill="none" stroke="#0f2a50" stroke-width="3.200" stroke-linecap="round" stroke-linejoin="round"/><path d="M16.700 4L25.800 13.200 13.100 25.900 4.200 16.800z" fill="none" stroke="#4a7dbd" stroke-width="1.700" stroke-linecap="round" stroke-linejoin="round"/><circle cx="16.7" cy="4" r="2.3" fill="#ef2929" stroke="#6a0000" stroke-width=".7"/><circle cx="25.8" cy="13.2" r="2.3" fill="#ef2929" stroke="#6a0000" stroke-width=".7"/><circle cx="13.1" cy="25.9" r="2.3" fill="#ef2929" stroke="#6a0000" stroke-width=".7"/><circle cx="4.2" cy="16.8" r="2.3" fill="#ef2929" stroke="#6a0000" stroke-width=".7"/></svg>
<svg class="i" style="left:283.0px;top:141.0px" width="30" height="30" viewBox="0 0 30 30"><path d="M13.200 4V16.800H25.700M13.200 16.800L4 25.900" fill="none" stroke="#0f2a50" stroke-width="3.200" stroke-linecap="round" stroke-linejoin="round"/><path d="M13.200 4V16.800H25.700M13.200 16.800L4 25.900" fill="none" stroke="#4a7dbd" stroke-width="1.700" stroke-linecap="round" stroke-linejoin="round"/><circle cx="13.2" cy="4" r="2.3" fill="#ef2929" stroke="#6a0000" stroke-width=".7"/><circle cx="25.7" cy="16.8" r="2.3" fill="#ef2929" stroke="#6a0000" stroke-width=".7"/><circle cx="4" cy="25.9" r="2.3" fill="#ef2929" stroke="#6a0000" stroke-width=".7"/><circle cx="13.2" cy="16.8" r="2.3" fill="#ef2929" stroke="#6a0000" stroke-width=".7"/></svg>
<svg class="i" style="left:320.0px;top:141.0px" width="30" height="30" viewBox="0 0 30 30"><path d="M3.900 3.700C7 2.500 10.500 6.500 13.800 5.400 17 4.300 19.500 1.500 23.500 1.800 27 2 28.800 4 28.200 8.500 27.600 13 21.500 14.500 21.600 18.500c.1 3 3.500 5 2.200 7.700-1 2-3.500 2.300-5.500 2-4-.6-8-2.300-12.800-5-2.500-1.500-3-3.500-3-5.700V7.500C2.500 5.500 2.700 4.200 3.900 3.700z" fill="url(#gBlob)" stroke="#1d3f70" stroke-width=".9"/><circle cx="26.3" cy="4.3" r="2.3" fill="#ef2929" stroke="#6a0000" stroke-width=".7"/><circle cx="4.7" cy="13.4" r="2.3" fill="#ef2929" stroke="#6a0000" stroke-width=".7"/><circle cx="22.7" cy="25.9" r="2.3" fill="#ef2929" stroke="#6a0000" stroke-width=".7"/></svg>
<svg class="i" style="left:357.5px;top:141.0px" width="30" height="30" viewBox="0 0 30 30"><path d="M3.900 3.700C7 2.500 10.500 6.500 13.800 5.400 17 4.300 19.500 1.500 23.500 1.800 27 2 28.800 4 28.200 8.500 27.600 13 21.500 14.500 21.600 18.500c.1 3 3.500 5 2.200 7.700-1 2-3.500 2.300-5.500 2-4-.6-8-2.300-12.800-5-2.500-1.500-3-3.500-3-5.700V7.500C2.500 5.500 2.700 4.200 3.900 3.700z" fill="url(#gBlobG)" stroke="#2d5a00" stroke-width=".9"/><circle cx="26.3" cy="4.3" r="2.3" fill="#ef2929" stroke="#6a0000" stroke-width=".7"/><circle cx="4.7" cy="13.4" r="2.3" fill="#ef2929" stroke="#6a0000" stroke-width=".7"/><circle cx="22.7" cy="25.9" r="2.3" fill="#ef2929" stroke="#6a0000" stroke-width=".7"/></svg>
<svg class="i" style="left:395.0px;top:141.0px" width="30" height="30" viewBox="0 0 30 30"><path d="M7.500 9.500C3.500 11 1.500 16 1.500 19.500c0 1.500.8 2.500 2 2 2-.8 3.500-3.500 4.500-6.500zM22.500 9.500c4 1.500 6 6.500 6 10 0 1.500-.8 2.500-2 2-2-.8-3.500-3.500-4.500-6.500z" fill="#c4c4c4" stroke="#9a9a9a" stroke-width=".8"/><path d="M7 11C5.500 8.500 6.500 5.500 9 5 9.500 2.800 12 1.500 14 2.500c1-1.300 3.500-1.300 4.500.2C21 2 23 3.500 23 5.500c2 1 2.500 3.500 1 5.500l-1.500 8c-.5 4-3 8.500-7.500 9-4.500-.5-7-5-7.500-9z" fill="#b9b9b9" stroke="#9a9a9a" stroke-width=".8"/><path d="M7 11c2-2 5-2.500 8-2.500s6 .5 8 2.500c1-2 .5-4-1-5-0-2-2-3.500-4.500-2.800-1-1.500-3.500-1.500-4.500-.2C11 2 9.500 3 9 5 6.500 5.500 5.500 8.500 7 11z" fill="#cdcdcd"/><ellipse cx="15.200" cy="15" rx="4.500" ry="2.700" fill="#f4f4f4"/><ellipse cx="14" cy="15" rx="1" ry=".8" fill="#777"/><ellipse cx="16.500" cy="15" rx="1" ry=".8" fill="#777"/><path d="M13 23.500l2 2 2-2M15 25.500v2" stroke="#8a8a8a" stroke-width=".9" fill="none"/></svg>
<div style="position:absolute;left:430px;top:136px;width:1px;height:40px;background:#b4b4b4;"></div>
<div style="position:absolute;left:431px;top:136px;width:1px;height:40px;background:#fdfdfd;"></div>
<div style="position:absolute;left:436px;top:142px;width:1px;height:28px;background:repeating-linear-gradient(#b8b8b8 0 1px,transparent 1px 3px)"></div>
<svg class="i" style="left:446.5px;top:141.0px" width="30" height="30" viewBox="0 0 30 30"><path d="M14.900 16.300L28 21 14.900 27.600 1.800 22z" fill="#fafafa" stroke="#555753" stroke-width="2.800" stroke-linejoin="round"/><path d="M14.900 16.300L28 21 14.900 27.600 1.800 22z" fill="none" stroke="#d3d7cf" stroke-width="1.100" stroke-linejoin="round"/><path d="M2.4 7.6L15.2 2.6L27.3 6.5L14.6 11.5z" fill="#fce94f" stroke="#3a3200" stroke-width="0.8" stroke-linejoin="round" /><path d="M2.4 7.6L14.6 11.5L14.6 19.8L2.4 16.5z" fill="url(#gY)" stroke="#3a3200" stroke-width="0.8" stroke-linejoin="round" /><path d="M14.6 11.5L27.3 6.5L27.3 13.7L14.6 19.8z" fill="url(#gYd)" stroke="#3a3200" stroke-width="0.8" stroke-linejoin="round" /></svg>
<svg class="i" style="left:484.0px;top:141.0px" width="30" height="30" viewBox="0 0 30 30"><path d="M1.8 23.8L28 5.8" stroke="#e01b1b" stroke-width="2.4" stroke-linecap="round" /><path d="M2.300 9.500L16.500 3.300C22.500 4.500 27.500 10 28.500 17.500L16.500 26.800C15 20.500 10 16.500 4 15.300z" fill="url(#gYx)" stroke="#3a3200" stroke-width=".9" stroke-linejoin="round"/><path d="M4 15.300C10 16.500 15 20.500 16.500 26.800L28.500 17.500" fill="none" stroke="#3a3200" stroke-width=".7"/><path d="M2.300 9.500C9 10.500 14.500 15 16.500 21.500" fill="none" stroke="#3a3200" stroke-width=".7"/><path d="M16.500 26.800L4 15.300 2.300 9.500C9 10.500 14.500 15 16.500 21.500z" fill="#edd400" stroke="#3a3200" stroke-width=".7"/><path d="M1.8 23.8L7 20.3" stroke="#e01b1b" stroke-width="2.4" stroke-linecap="round" /></svg>
<svg class="i" style="left:521.0px;top:141.0px" width="30" height="30" viewBox="0 0 30 30"><path d="M4.5 14L10.6 4.9L25.9 7.9L12.1 15.8z" fill="#fce94f" stroke="#3a3200" stroke-width="0.6" stroke-linejoin="round" /><path d="M12.100 15.800L25.900 7.900 25.600 26.200 11.500 24.300z" fill="url(#gY2)" stroke="#3a3200" stroke-width=".6"/><path d="M10.600 4.900L25.900 7.900 25.600 26.200" fill="none" stroke="#e01b1b" stroke-width="2.400" stroke-linejoin="miter"/><path d="M4.100 14.700L10.700 16.400V23.300L4.100 21.500z" fill="#edd400" stroke="#e01b1b" stroke-width="2.100" stroke-linejoin="miter"/></svg>
<svg class="i" style="left:558.0px;top:141.0px" width="30" height="30" viewBox="0 0 30 30"><path d="M11.300 18.800C17 16 21 12 22.600 6L28.200 18.700C23 23.500 17 26.500 10.500 27z" fill="#d9b800" stroke="#3a3200" stroke-width=".6"/><ellipse cx="15" cy="20.800" rx="2" ry="1" transform="rotate(-25 15 20.800)" fill="#e8901a"/><ellipse cx="22.500" cy="14" rx="1.600" ry=".9" transform="rotate(-50 22.500 14)" fill="#e8901a"/><path d="M4 16C8 13.500 10 9.500 10.300 3.400L22.600 6C21 12 17 16 11.300 18.800z" fill="#fce94f" stroke="#3a3200" stroke-width=".6"/><path d="M10.300 3.400L22.600 6 28.200 18.700" fill="none" stroke="#e01b1b" stroke-width="2.400" stroke-linejoin="miter"/><path d="M3 16.700L10.300 19.100 10 26 3 23.500z" fill="#edd400" stroke="#e01b1b" stroke-width="2.100" stroke-linejoin="miter"/><ellipse cx="5.300" cy="22.400" rx="2.300" ry="1.200" fill="#8a0000" stroke="#3a3200" stroke-width=".4"/><ellipse cx="26.900" cy="4.100" rx="1.400" ry="2.100" transform="rotate(25 26.900 4.100)" fill="#e01b1b" stroke="#3a3200" stroke-width=".6"/></svg>
<svg class="i" style="left:595.0px;top:141.0px" width="30" height="30" viewBox="0 0 30 30"><path d="M13.300 7C15 3.500 18.500 1.500 21.600 1.500 22.800 2.800 23 4 22.700 5.200L17 9z" fill="#fce94f" stroke="#4a4000" stroke-width=".9" stroke-linejoin="round"/><path d="M21.600 1.500C20 3 19.500 5 19.800 7" fill="none" stroke="#4a4000" stroke-width=".6"/><path d="M9.600 21.500C10 25 12 27.500 14.800 28.400 16 26.500 16 24 15.200 21.500z" fill="#c4a000" stroke="#4a4000" stroke-width=".9" stroke-linejoin="round"/><ellipse cx="15.400" cy="15" rx="7.400" ry="4.200" transform="rotate(24 15.400 15)" fill="none" stroke="#4a4000" stroke-width="7"/><ellipse cx="15.400" cy="15" rx="7.400" ry="4.200" transform="rotate(24 15.400 15)" fill="none" stroke="#e0c61a" stroke-width="5.600"/><ellipse cx="15" cy="14.200" rx="8.200" ry="5" transform="rotate(24 15 14.200)" fill="none" stroke="#fce94f" stroke-width="1.800" stroke-dasharray="26 100" stroke-dashoffset="-22"/><path d="M20.500 10.500C23.500 12 25 15 24.500 19" fill="none" stroke="#4a4000" stroke-width=".6"/><path d="M2.5 26.9L28.3 5.2" stroke="#e01b1b" stroke-width="2.2" stroke-linecap="round" /></svg>
<svg class="i" style="left:633.5px;top:141.0px" width="30" height="30" viewBox="0 0 30 30"><path d="M3.1 8.3L14 3.5L26.3 5.6L16.7 9.7z" fill="#efefef" stroke="#bcbcbc" stroke-width="0.6" stroke-linejoin="round" /><path d="M3.1 8.3L16.7 9.7L16.7 25.8L3.5 24z" fill="#e4e4e4" stroke="#bcbcbc" stroke-width="0.6" stroke-linejoin="round" /><path d="M16.7 9.7L26.3 5.6L25.6 21.3L16.7 25.8z" fill="#d2d2d2" stroke="#bcbcbc" stroke-width="0.6" stroke-linejoin="round" /><path d="M3.500 24L16.700 25.800 25.600 21.300M16.700 9.300V25.800" fill="none" stroke="#a6a6a6" stroke-width="1.800"/><circle cx="16.7" cy="9.3" r="2.300" fill="#a6a6a6" stroke="#bcbcbc" stroke-width=".5"/><circle cx="3.5" cy="24" r="2.300" fill="#a6a6a6" stroke="#bcbcbc" stroke-width=".5"/><circle cx="16.7" cy="25.8" r="2.300" fill="#a6a6a6" stroke="#bcbcbc" stroke-width=".5"/><circle cx="25.6" cy="21.3" r="2.300" fill="#a6a6a6" stroke="#bcbcbc" stroke-width=".5"/></svg>
<svg class="i" style="left:669.5px;top:153.5px" width="9" height="5" viewBox="0 0 9 5"><path d="M0 0h9L4.5 5z" fill="#888"/></svg>
<div style="position:absolute;left:683px;top:142px;width:1px;height:28px;background:#c8c8c8;"></div>
<svg class="i" style="left:691.0px;top:141.0px" width="30" height="30" viewBox="0 0 30 30"><path d="M2 14.6L15.6 4.4L28.9 8.1L14.4 19.3z" fill="#729fcf" stroke="#0b1521" stroke-width="0.8" stroke-linejoin="round" /><path d="M2 14.6L14.4 19.3L14.4 27.2L2 22.2z" fill="url(#gB)" stroke="#0b1521" stroke-width="0.8" stroke-linejoin="round" /><path d="M14.4 19.3L28.9 8.1L28.9 14.6L14.4 27.2z" fill="url(#gBd)" stroke="#0b1521" stroke-width="0.8" stroke-linejoin="round" /><path d="M8.8 12.7L16.3 7.4L23.7 9L15 15.2z" fill="#a40000" stroke="#280000" stroke-width="0.7" stroke-linejoin="round" /><path d="M16.300 7.400L15.500 12 23.700 9zM15.500 12L8.800 12.700 15 15.200z" fill="#ef2929" stroke="#280000" stroke-width=".4"/></svg>
<svg class="i" style="left:729.0px;top:141.0px" width="30" height="30" viewBox="0 0 30 30"><path d="M1.5 2.2L10.4 1.2L28.4 6.9L19.7 6.5z" fill="#729fcf" stroke="#0b1521" stroke-width="0.8" stroke-linejoin="round" /><path d="M19.7 6.5L28.4 6.9L28.4 28.4L19.7 26.9z" fill="url(#gBd)" stroke="#0b1521" stroke-width="0.8" stroke-linejoin="round" /><path d="M1.5 2.2L19.7 6.5L19.7 26.9L1.5 23.8z" fill="url(#gB)" stroke="#0b1521" stroke-width="0.8" stroke-linejoin="round" /><ellipse cx="9.800" cy="15.200" rx="6.200" ry="8.300" transform="rotate(-6 9.800 15.200)" fill="url(#gR)" stroke="#280000" stroke-width=".9"/><ellipse cx="14" cy="15.800" rx="1.300" ry="4.500" transform="rotate(-8 14 15.800)" fill="#fafafa"/></svg>
<svg class="i" style="left:766.0px;top:141.0px" width="30" height="30" viewBox="0 0 30 30"><path d="M1.8 24.3L28.3 5" stroke="#e01b1b" stroke-width="2.4" stroke-linecap="round" /><path d="M1.500 11.500C5 8 10 6.800 13.500 7L15.500 4.500C20 3.500 25 5.500 27.500 9.500L28.200 17 19 21.500 17.500 26.500 13 27.500 11.500 23C10 18.500 6 15 2.500 14.500z" fill="#3f71b3" stroke="#0b1521" stroke-width=".9" stroke-linejoin="round"/><path d="M13.500 7C15 5.800 18 5.500 19.500 6.300 23.500 8.500 26 12 26.500 16.500L20 19.500C19.500 15 17 10 13.500 7z" fill="url(#gR)" stroke="#280000" stroke-width=".7"/><path d="M1.500 11.500C8 11 14 16 15.500 23M4 10C10 10 16 15 17.500 21.500" fill="none" stroke="#0b1521" stroke-width=".7"/><path d="M2 12.500C7.500 12 13 16.500 14.500 22.500" fill="none" stroke="#8fb4dc" stroke-width=".9"/><path d="M1.8 24.3L6.5 21" stroke="#e01b1b" stroke-width="2.4" stroke-linecap="round" /></svg>
<svg class="i" style="left:803.5px;top:141.0px" width="30" height="30" viewBox="0 0 30 30"><path d="M4.5 14L10.6 4.9L25.9 7.9L12.1 15.8z" fill="#ef2929" stroke="#280000" stroke-width="0.6" stroke-linejoin="round" /><path d="M12.100 15.800L25.900 7.900 25.600 26.200 11.500 24.300z" fill="url(#gR2)" stroke="#280000" stroke-width=".6"/><path d="M10.600 4.900L25.900 7.900 25.600 26.200" fill="none" stroke="#4a7dbd" stroke-width="2.400" stroke-linejoin="miter"/><path d="M4.100 14.700L10.700 16.400V23.300L4.100 21.500z" fill="#cc0000" stroke="#4a7dbd" stroke-width="2.100" stroke-linejoin="miter"/></svg>
<svg class="i" style="left:841.0px;top:141.0px" width="30" height="30" viewBox="0 0 30 30"><path d="M11.300 18.800C17 16 21 12 22.600 6L28.200 18.700C23 23.500 17 26.500 10.500 27z" fill="#b80f0f" stroke="#280000" stroke-width=".6"/><ellipse cx="15" cy="20.800" rx="2" ry="1" transform="rotate(-25 15 20.800)" fill="#d85050"/><ellipse cx="22.500" cy="14" rx="1.600" ry=".9" transform="rotate(-50 22.500 14)" fill="#d85050"/><path d="M4 16C8 13.500 10 9.500 10.300 3.400L22.600 6C21 12 17 16 11.300 18.800z" fill="#ef2929" stroke="#280000" stroke-width=".6"/><path d="M10.300 3.400L22.600 6 28.200 18.700" fill="none" stroke="#4a7dbd" stroke-width="2.400" stroke-linejoin="miter"/><path d="M3 16.700L10.300 19.100 10 26 3 23.500z" fill="#cc0000" stroke="#4a7dbd" stroke-width="2.100" stroke-linejoin="miter"/><ellipse cx="5.300" cy="22.400" rx="2.300" ry="1.200" fill="#8a0000" stroke="#280000" stroke-width=".4"/><ellipse cx="26.900" cy="4.100" rx="1.400" ry="2.100" transform="rotate(25 26.900 4.100)" fill="#4a7dbd" stroke="#280000" stroke-width=".6"/></svg>
<svg class="i" style="left:878.5px;top:141.0px" width="30" height="30" viewBox="0 0 30 30"><path d="M13.300 7C15 3.500 18.500 1.500 21.600 1.500 22.800 2.800 23 4 22.700 5.200L17 9z" fill="#729fcf" stroke="#0b1521" stroke-width=".9" stroke-linejoin="round"/><path d="M21.600 1.500C20 3 19.500 5 19.800 7" fill="none" stroke="#0b1521" stroke-width=".6"/><path d="M9.600 21.500C10 25 12 27.500 14.800 28.400 16 26.500 16 24 15.200 21.500z" fill="#204a87" stroke="#0b1521" stroke-width=".9" stroke-linejoin="round"/><ellipse cx="15.400" cy="15" rx="7.400" ry="4.200" transform="rotate(24 15.400 15)" fill="none" stroke="#0b1521" stroke-width="7"/><ellipse cx="15.400" cy="15" rx="7.400" ry="4.200" transform="rotate(24 15.400 15)" fill="none" stroke="#3f71b3" stroke-width="5.600"/><ellipse cx="15" cy="14.200" rx="8.200" ry="5" transform="rotate(24 15 14.200)" fill="none" stroke="#729fcf" stroke-width="1.800" stroke-dasharray="26 100" stroke-dashoffset="-22"/><path d="M20.500 10.500C23.500 12 25 15 24.500 19" fill="none" stroke="#0b1521" stroke-width=".6"/><path d="M1 26.5L28 5.3" stroke="#e01b1b" stroke-width="2.2" stroke-linecap="round" /></svg>
<svg class="i" style="left:914.5px;top:141.0px" width="30" height="30" viewBox="0 0 30 30"><path d="M3.1 8.3L14 3.5L26.3 5.6L16.7 9.7z" fill="#b4b4b4" stroke="#8c8c8c" stroke-width="0.6" stroke-linejoin="round" /><path d="M3.1 8.3L16.7 9.7L16.7 25.8L3.5 24z" fill="#a8a8a8" stroke="#8c8c8c" stroke-width="0.6" stroke-linejoin="round" /><path d="M16.7 9.7L26.3 5.6L25.6 21.3L16.7 25.8z" fill="#979797" stroke="#8c8c8c" stroke-width="0.6" stroke-linejoin="round" /><path d="M3.500 24L16.700 25.800 25.600 21.300M16.700 9.300V25.800" fill="none" stroke="#aaaaaa" stroke-width="1.800"/><circle cx="16.7" cy="9.3" r="2.300" fill="#aaaaaa" stroke="#8c8c8c" stroke-width=".5"/><circle cx="3.5" cy="24" r="2.300" fill="#aaaaaa" stroke="#8c8c8c" stroke-width=".5"/><circle cx="16.7" cy="25.8" r="2.300" fill="#aaaaaa" stroke="#8c8c8c" stroke-width=".5"/><circle cx="25.6" cy="21.3" r="2.300" fill="#aaaaaa" stroke="#8c8c8c" stroke-width=".5"/></svg>
<svg class="i" style="left:951.0px;top:153.5px" width="9" height="5" viewBox="0 0 9 5"><path d="M0 0h9L4.5 5z" fill="#888"/></svg>
<div style="position:absolute;left:966px;top:142px;width:1px;height:28px;background:#c8c8c8;"></div>
<svg class="i" style="left:974.0px;top:141.0px" width="30" height="30" viewBox="0 0 30 30"><path d="M1.4 28.4L1.4 15.4L22.2 2.4L28.6 4.6L28.6 28.4z" fill="url(#gB)" stroke="#0b1521" stroke-width="0.8" stroke-linejoin="round" /><path d="M1.400 24.500L18 15M1.400 19.500L13 13" stroke="#2c5a9c" stroke-width=".7" fill="none"/><path d="M6.100 5.500C6.100 1 9 .5 11 2.500L15.400 5.500V15L11 18 6.100 15.500z" fill="#3465a4" stroke="#0b1521" stroke-width=".8" stroke-linejoin="round"/><path d="M11 2.500V18" stroke="#0b1521" stroke-width=".6"/><path d="M6.100 5.500C6.100 1 9 .5 11 2.500V18L6.100 15.500z" fill="#4a7dbd" stroke="#0b1521" stroke-width=".6"/><path d="M3.7 24.7L27.8 9.8" stroke="#e01b1b" stroke-width="2" stroke-linecap="round" stroke-dasharray="3.200 3.800"/><path d="M14.800 13V20C14.800 24 27.100 24 27.100 20V13z" fill="url(#gYh)" stroke="#3a3200" stroke-width=".8"/><path d="M14.800 13C14.800 10.500 18 10 21 8.500 24 10 27.100 10.500 27.100 13 27.100 16.300 14.800 16.300 14.800 13z" fill="#fce94f" stroke="#3a3200" stroke-width=".8" stroke-linejoin="round"/></svg>
<svg class="i" style="left:1011.0px;top:141.0px" width="30" height="30" viewBox="0 0 30 30"><path d="M1.2 28.4L1.2 13.9L22 3.7L28.2 6.1L28.2 28.4z" fill="url(#gB)" stroke="#0b1521" stroke-width="0.8" stroke-linejoin="round" /><path d="M1.200 23.500L12 20 19 28.400M1.200 23.500L28.200 17" stroke="#2c5a9c" stroke-width=".7" fill="none"/><path d="M1.9 13.05L5.748 10.8L9.3 11.850000000000001L5.452 13.950000000000001z" fill="#729fcf" stroke="#0b1521" stroke-width="0.6" stroke-linejoin="round" /><path d="M1.9 13.05L5.452 13.950000000000001L5.452 18.3L1.9 17.25z" fill="#3465a4" stroke="#0b1521" stroke-width="0.6" stroke-linejoin="round" /><path d="M5.452 13.950000000000001L9.3 11.850000000000001L9.3 16.8L5.452 18.3z" fill="#204a87" stroke="#0b1521" stroke-width="0.6" stroke-linejoin="round" /><path d="M10.5 13.719999999999999L14.712 11.5L18.6 12.536L14.388 14.607999999999999z" fill="#fce94f" stroke="#3a3200" stroke-width="0.6" stroke-linejoin="round" /><path d="M10.5 13.719999999999999L14.388 14.607999999999999L14.388 18.9L10.5 17.863999999999997z" fill="#edd400" stroke="#3a3200" stroke-width="0.6" stroke-linejoin="round" /><path d="M14.388 14.607999999999999L18.6 12.536L18.6 17.419999999999998L14.388 18.9z" fill="#c4a000" stroke="#3a3200" stroke-width="0.6" stroke-linejoin="round" /><path d="M19.8 13.719999999999999L24.012 11.5L27.9 12.536L23.688 14.607999999999999z" fill="#fce94f" stroke="#3a3200" stroke-width="0.6" stroke-linejoin="round" /><path d="M19.8 13.719999999999999L23.688 14.607999999999999L23.688 18.9L19.8 17.863999999999997z" fill="#edd400" stroke="#3a3200" stroke-width="0.6" stroke-linejoin="round" /><path d="M23.688 14.607999999999999L27.9 12.536L27.9 17.419999999999998L23.688 18.9z" fill="#c4a000" stroke="#3a3200" stroke-width="0.6" stroke-linejoin="round" /></svg>
<svg class="i" style="left:1048.5px;top:141.0px" width="30" height="30" viewBox="0 0 30 30"><path d="M1.6 28.4L1.6 16L21 3.4L28.4 5L28.4 28.4z" fill="url(#gB)" stroke="#0b1521" stroke-width="0.8" stroke-linejoin="round" /><path d="M1.600 24L13 21 20 28.400" stroke="#2c5a9c" stroke-width=".7" fill="none"/><path d="M11.9 7.34L15.748000000000001 5.3L19.3 6.252L15.452 8.155999999999999z" fill="#fce94f" stroke="#3a3200" stroke-width="0.6" stroke-linejoin="round" /><path d="M11.9 7.34L15.452 8.155999999999999L15.452 12.1L11.9 11.148z" fill="#edd400" stroke="#3a3200" stroke-width="0.6" stroke-linejoin="round" /><path d="M15.452 8.155999999999999L19.3 6.252L19.3 10.74L15.452 12.1z" fill="#c4a000" stroke="#3a3200" stroke-width="0.6" stroke-linejoin="round" /><path d="M19.3 9.84L23.512 7.8L27.4 8.752L23.188 10.655999999999999z" fill="#fce94f" stroke="#3a3200" stroke-width="0.6" stroke-linejoin="round" /><path d="M19.3 9.84L23.188 10.655999999999999L23.188 14.6L19.3 13.648z" fill="#edd400" stroke="#3a3200" stroke-width="0.6" stroke-linejoin="round" /><path d="M23.188 10.655999999999999L27.4 8.752L27.4 13.24L23.188 14.6z" fill="#c4a000" stroke="#3a3200" stroke-width="0.6" stroke-linejoin="round" /><path d="M5.1 11.46L8.948 9.6L12.5 10.468L8.652 12.204z" fill="#fce94f" stroke="#3a3200" stroke-width="0.6" stroke-linejoin="round" /><path d="M5.1 11.46L8.652 12.204L8.652 15.8L5.1 14.932z" fill="#edd400" stroke="#3a3200" stroke-width="0.6" stroke-linejoin="round" /><path d="M8.652 12.204L12.5 10.468L12.5 14.56L8.652 15.8z" fill="#c4a000" stroke="#3a3200" stroke-width="0.6" stroke-linejoin="round" /><path d="M20.6 15.34L24.448 13.3L28 14.252L24.152 16.156000000000002z" fill="#fce94f" stroke="#3a3200" stroke-width="0.6" stroke-linejoin="round" /><path d="M20.6 15.34L24.152 16.156000000000002L24.152 20.1L20.6 19.148z" fill="#edd400" stroke="#3a3200" stroke-width="0.6" stroke-linejoin="round" /><path d="M24.152 16.156000000000002L28 14.252L28 18.740000000000002L24.152 20.1z" fill="#c4a000" stroke="#3a3200" stroke-width="0.6" stroke-linejoin="round" /><path d="M5.7 16.82L9.236 14.6L12.5 15.636L8.964 17.708z" fill="#729fcf" stroke="#0b1521" stroke-width="0.6" stroke-linejoin="round" /><path d="M5.7 16.82L8.964 17.708L8.964 22L5.7 20.964z" fill="#3465a4" stroke="#0b1521" stroke-width="0.6" stroke-linejoin="round" /><path d="M8.964 17.708L12.5 15.636L12.5 20.52L8.964 22z" fill="#204a87" stroke="#0b1521" stroke-width="0.6" stroke-linejoin="round" /><path d="M12.5 18.900000000000002L16.712 16.8L20.6 17.78L16.388 19.740000000000002z" fill="#fce94f" stroke="#3a3200" stroke-width="0.6" stroke-linejoin="round" /><path d="M12.5 18.900000000000002L16.388 19.740000000000002L16.388 23.8L12.5 22.82z" fill="#edd400" stroke="#3a3200" stroke-width="0.6" stroke-linejoin="round" /><path d="M16.388 19.740000000000002L20.6 17.78L20.6 22.400000000000002L16.388 23.8z" fill="#c4a000" stroke="#3a3200" stroke-width="0.6" stroke-linejoin="round" /></svg>
<svg class="i" style="left:1085.5px;top:141.0px" width="30" height="30" viewBox="0 0 30 30"><path d="M1.5 28.4L1.5 16.4L14 9L28.5 12L28.5 28.4z" fill="url(#gB)" stroke="#0b1521" stroke-width="0.8" stroke-linejoin="round" /><path d="M1.500 24L13 21.500 20 28.400" stroke="#2c5a9c" stroke-width=".7" fill="none"/><path d="M12.6 6.46L20.66 2.2L28.1 4.188000000000001L20.04 8.164z" fill="#fce94f" stroke="#3a3200" stroke-width="0.6" stroke-linejoin="round" /><path d="M12.6 6.46L20.04 8.164L20.04 16.4L12.6 14.411999999999999z" fill="#edd400" stroke="#3a3200" stroke-width="0.6" stroke-linejoin="round" /><path d="M20.04 8.164L28.1 4.188000000000001L28.1 13.559999999999999L20.04 16.4z" fill="#c4a000" stroke="#3a3200" stroke-width="0.6" stroke-linejoin="round" /><path d="M4.6 6.92L8.448 4.7L12 5.736000000000001L8.152 7.808z" fill="#fce94f" stroke="#3a3200" stroke-width="0.6" stroke-linejoin="round" /><path d="M4.6 6.92L8.152 7.808L8.152 12.1L4.6 11.064z" fill="#edd400" stroke="#3a3200" stroke-width="0.6" stroke-linejoin="round" /><path d="M8.152 7.808L12 5.736000000000001L12 10.62L8.152 12.1z" fill="#c4a000" stroke="#3a3200" stroke-width="0.6" stroke-linejoin="round" /><path d="M8.3 19.04L12.200000000000001 17L15.8 17.952L11.9 19.856z" fill="#729fcf" stroke="#0b1521" stroke-width="0.6" stroke-linejoin="round" /><path d="M8.3 19.04L11.9 19.856L11.9 23.8L8.3 22.848z" fill="#3465a4" stroke="#0b1521" stroke-width="0.6" stroke-linejoin="round" /><path d="M11.9 19.856L15.8 17.952L15.8 22.44L11.9 23.8z" fill="#204a87" stroke="#0b1521" stroke-width="0.6" stroke-linejoin="round" /><path d="M16.4 18.349999999999998L22.172 15.2L27.5 16.669999999999998L21.727999999999998 19.61z" fill="#fce94f" stroke="#3a3200" stroke-width="0.6" stroke-linejoin="round" /><path d="M16.4 18.349999999999998L21.727999999999998 19.61L21.727999999999998 25.7L16.4 24.23z" fill="#edd400" stroke="#3a3200" stroke-width="0.6" stroke-linejoin="round" /><path d="M21.727999999999998 19.61L27.5 16.669999999999998L27.5 23.599999999999998L21.727999999999998 25.7z" fill="#c4a000" stroke="#3a3200" stroke-width="0.6" stroke-linejoin="round" /></svg>
<div style="position:absolute;left:1122px;top:142px;width:1px;height:28px;background:#c8c8c8;"></div>
<svg class="i" style="left:1130.0px;top:141.0px" width="30" height="30" viewBox="0 0 30 30"><path d="M12.7 2.8L17 2.4L28.5 7.4L24.4 8.4z" fill="#729fcf" stroke="#0b1521" stroke-width="0.8" stroke-linejoin="round" /><path d="M14.500 22C15 14 19 9.500 24.400 8.400L28.500 7.400V18.900L14.500 26.900z" fill="url(#gBd)" stroke="#0b1521" stroke-width=".8" stroke-linejoin="round"/><path d="M12.700 4.400L24.400 8.400C19 9.500 15 14 14.500 22L2.200 18.300C2.500 11 6.500 5.500 12.700 4.400z" fill="url(#gRh)" stroke="#280000" stroke-width=".8" stroke-linejoin="round"/><path d="M2.2 18.3L14.5 22L14.5 26.9L2.2 22.6z" fill="#4a7dbd" stroke="#0b1521" stroke-width="0.8" stroke-linejoin="round" /><path d="M3.500 20.200L13.300 23.200V25.200L3.500 22z" fill="#729fcf"/></svg>
<svg class="i" style="left:1167.0px;top:141.0px" width="30" height="30" viewBox="0 0 30 30"><path d="M12.8 2.8L16.5 2.4L28.2 7.4L23.9 8.4z" fill="#729fcf" stroke="#0b1521" stroke-width="0.8" stroke-linejoin="round" /><path d="M14.6 22L23.9 8.4L28.2 7.4L28.2 18.9L14.6 26.9z" fill="url(#gBd)" stroke="#0b1521" stroke-width="0.8" stroke-linejoin="round" /><path d="M12.2 4.4L23.9 8.4L14.6 22L1.9 18z" fill="url(#gR)" stroke="#280000" stroke-width="0.8" stroke-linejoin="round" /><path d="M1.9 18L14.6 22L14.6 26.9L1.9 22.6z" fill="#4a7dbd" stroke="#0b1521" stroke-width="0.8" stroke-linejoin="round" /><path d="M3.200 20L13.400 23.200V25.200L3.200 21.800z" fill="#729fcf"/></svg>
<svg class="i" style="left:1204.5px;top:141.0px" width="30" height="30" viewBox="0 0 30 30"><path d="M14 1.6L28.6 6.9L28.2 22L15.9 28.4L1.9 22L1.6 6.9z" fill="#4a7dbd" stroke="#0b1521" stroke-width="0.8" stroke-linejoin="round" /><path d="M4.500 22.500L15.900 26.800 26.500 21.500 15.900 24z" fill="#f2f2f2"/><path d="M14 3L26.5 7.3L15.9 11L3.7 7.3z" fill="#729fcf" stroke="#0b1521" stroke-width="0.5" stroke-linejoin="round" /><path d="M5 9.5L14.7 12.8L14.7 24.2L5.6 21.2z" fill="url(#gR)" stroke="#280000" stroke-width="0.7" stroke-linejoin="round" /><path d="M17.1 12.8L27.3 8.8L27.1 20L17.1 24.2z" fill="url(#gR)" stroke="#280000" stroke-width="0.7" stroke-linejoin="round" /><path d="M8.5 8L23.5 7L15.9 10.5z" fill="#cc0000" stroke="#280000" stroke-width="0.6" stroke-linejoin="round" /><path d="M1.600 6.900L15.900 11.500 28.600 6.900M15.900 11.500V28.400" fill="none" stroke="#0b1521" stroke-width=".7"/></svg>
<svg class="i" style="left:1241.5px;top:141.0px" width="30" height="30" viewBox="0 0 30 30"><path d="M5.5 4.7L14.7 1.6L28.3 5.3L28.3 20.1L16.6 27.9L1.7 24.2z" fill="url(#gB)" stroke="#0b1521" stroke-width="0.8" stroke-linejoin="round" /><path d="M28.3 5.3L28.3 20.1L16.6 27.9L17.2 23.5L24 18.9L24.6 7.8z" fill="#3465a4" stroke="#0b1521" stroke-width="0.6" stroke-linejoin="round" /><path d="M8.5 7.1L14.1 5.3L14.1 17.6L7.7 20.1z" fill="#cc0000" stroke="#280000" stroke-width="0.7" stroke-linejoin="round" /><path d="M14.1 5.3L24.6 7.8L24 18.9L14.1 17.6z" fill="#ef2929" stroke="#280000" stroke-width="0.7" stroke-linejoin="round" /><path d="M7.7 20.1L14.1 17.6L24 18.9L17.2 23.5z" fill="#e01b1b" stroke="#280000" stroke-width="0.7" stroke-linejoin="round" /></svg>
<div style="position:absolute;left:1279px;top:142px;width:1px;height:28px;background:#c8c8c8;"></div>
<svg class="i" style="left:1286.0px;top:141.0px" width="30" height="30" viewBox="0 0 30 30"><circle cx="19.700" cy="12.100" r="8.200" fill="#729fcf" stroke="#1d3f70" stroke-width=".9"/><circle cx="10.700" cy="18.500" r="8.700" fill="url(#gBall)" stroke="#1d3f70" stroke-width=".9"/></svg>
<div style="position:absolute;left:1322px;top:136px;width:1px;height:40px;background:#b4b4b4;"></div>
<div style="position:absolute;left:1323px;top:136px;width:1px;height:40px;background:#fdfdfd;"></div>
<div style="position:absolute;left:1328px;top:142px;width:1px;height:28px;background:repeating-linear-gradient(#b8b8b8 0 1px,transparent 1px 3px)"></div>
<svg class="i" style="left:1337.0px;top:141.0px" width="30" height="30" viewBox="0 0 30 30"><path d="M18.500 22L27.500 24.800 27.800 26.800 17.500 24.300z" fill="#edd400" stroke="#6a5a00" stroke-width=".5"/><path d="M27.300 24.300l2 .6.200 2.900-1.900.4z" fill="#777974" stroke="#444" stroke-width=".4"/><path d="M2.500 3.700L8.300 1.200 20 3.700C22.500 6 23.700 9 23.500 12.100L23.100 20.700 17 25.400 3 19.300z" fill="#b9bcb5" stroke="#4a4c47" stroke-width=".9" stroke-linejoin="round"/><path d="M2.500 3.700L16.500 7 17 25.400 3 19.300z" fill="#d9dbd6" stroke="#6a6c67" stroke-width=".6"/><path d="M2.500 3.700L8.300 1.200 20 3.700 16.500 7z" fill="#e6e8e3" stroke="#6a6c67" stroke-width=".5"/><circle cx="10.200" cy="13.300" r="6.200" fill="#555753"/><path d="M4.050 12.500a6.200 6.200 0 0 1 12.300 1.600z" fill="#edd400"/><circle cx="10.200" cy="13.300" r="6.200" fill="none" stroke="#2e2e2e" stroke-width=".7"/><rect x="18.300" y="11.500" width="2.800" height="6.800" fill="#edd400" stroke="#6a5a00" stroke-width=".5"/></svg>
<svg class="i" style="left:1375.0px;top:141.0px" width="30" height="30" viewBox="0 0 30 30"><path d="M18.500 22L27.500 24.800 27.800 26.800 17.500 24.300z" fill="#edd400" stroke="#6a5a00" stroke-width=".5"/><path d="M27.300 24.300l2 .6.200 2.900-1.900.4z" fill="#777974" stroke="#444" stroke-width=".4"/><path d="M2.500 3.700L8.300 1.200 20 3.700C22.500 6 23.700 9 23.500 12.100L23.100 20.700 17 25.400 3 19.300z" fill="#b9bcb5" stroke="#4a4c47" stroke-width=".9" stroke-linejoin="round"/><path d="M2.500 3.700L16.500 7 17 25.400 3 19.300z" fill="#d9dbd6" stroke="#6a6c67" stroke-width=".6"/><path d="M2.500 3.700L8.300 1.200 20 3.700 16.500 7z" fill="#e6e8e3" stroke="#6a6c67" stroke-width=".5"/><circle cx="10.200" cy="13.300" r="6.200" fill="#555753"/><path d="M4.050 12.500a6.200 6.200 0 0 1 12.300 1.600z" fill="#edd400"/><circle cx="10.200" cy="13.300" r="6.200" fill="none" stroke="#2e2e2e" stroke-width=".7"/><rect x="18.300" y="11.500" width="2.800" height="6.800" fill="#edd400" stroke="#6a5a00" stroke-width=".5"/><path d="M6.500 7.500C9 2.500 18 1.500 22.500 8L24.500 6.500 24 13 18 11.500 20 10C17 6 11.500 6.500 9.500 9.500z" fill="#3465a4" stroke="#0f2a50" stroke-width=".7" stroke-linejoin="round"/><path d="M2.600 5.200L8 25.700 26.900 15.200" fill="none" stroke="#6a0000" stroke-width="3.200" stroke-linejoin="round" stroke-linecap="round"/><path d="M2.600 5.200L8 25.700 26.900 15.200" fill="none" stroke="#ef2929" stroke-width="1.900" stroke-linejoin="round" stroke-linecap="round"/></svg>
<div style="position:absolute;left:1411px;top:142px;width:1px;height:28px;background:#c8c8c8;"></div>
<svg class="i" style="left:1419.0px;top:141.0px" width="30" height="30" viewBox="0 0 30 30"><path d="M18.500 22L27.500 24.800 27.800 26.800 17.500 24.300z" fill="#edd400" stroke="#6a5a00" stroke-width=".5"/><path d="M27.300 24.300l2 .6.200 2.900-1.900.4z" fill="#777974" stroke="#444" stroke-width=".4"/><path d="M2.500 3.700L8.300 1.200 20 3.700C22.500 6 23.700 9 23.500 12.100L23.100 20.700 17 25.400 3 19.300z" fill="#b9bcb5" stroke="#4a4c47" stroke-width=".9" stroke-linejoin="round"/><path d="M2.500 3.700L16.500 7 17 25.400 3 19.300z" fill="#d9dbd6" stroke="#6a6c67" stroke-width=".6"/><path d="M2.500 3.700L8.300 1.200 20 3.700 16.500 7z" fill="#e6e8e3" stroke="#6a6c67" stroke-width=".5"/><circle cx="10.200" cy="13.300" r="6.200" fill="#555753"/><path d="M4.050 12.500a6.200 6.200 0 0 1 12.300 1.600z" fill="#edd400"/><circle cx="10.200" cy="13.300" r="6.200" fill="none" stroke="#2e2e2e" stroke-width=".7"/><rect x="18.300" y="11.500" width="2.800" height="6.800" fill="#edd400" stroke="#6a5a00" stroke-width=".5"/><g fill="#729fcf" stroke="#3465a4" stroke-width=".5"><path d="M14.500 8C15 4 18 1.800 21.500 1.800c2 0 3.700.8 5 2L28.500 2v6.500h-6.500l2.200-2.200c-.8-.7-1.700-1-2.700-1-2.200 0-3.500 1.500-3.800 3.500z"/><path d="M28.800 9.500c-.5 4-3.500 6.200-7 6.200-2 0-3.700-.8-5-2L14.800 15.500V9h6.500l-2.200 2.200c.8.700 1.700 1 2.700 1 2.200 0 3.500-1.500 3.800-3.500z"/></g></svg>
<svg class="i" style="left:1456.5px;top:141.0px" width="30" height="30" viewBox="0 0 30 30"><path d="M18.500 22L27.500 24.800 27.800 26.800 17.500 24.300z" fill="#edd400" stroke="#6a5a00" stroke-width=".5"/><path d="M27.300 24.300l2 .6.200 2.900-1.900.4z" fill="#777974" stroke="#444" stroke-width=".4"/><path d="M2.500 3.700L8.300 1.200 20 3.700C22.500 6 23.700 9 23.500 12.100L23.100 20.700 17 25.400 3 19.300z" fill="#b9bcb5" stroke="#4a4c47" stroke-width=".9" stroke-linejoin="round"/><path d="M2.500 3.700L16.500 7 17 25.400 3 19.300z" fill="#d9dbd6" stroke="#6a6c67" stroke-width=".6"/><path d="M2.500 3.700L8.300 1.200 20 3.700 16.500 7z" fill="#e6e8e3" stroke="#6a6c67" stroke-width=".5"/><circle cx="10.200" cy="13.300" r="6.200" fill="#555753"/><path d="M4.050 12.500a6.200 6.200 0 0 1 12.300 1.600z" fill="#edd400"/><circle cx="10.200" cy="13.300" r="6.200" fill="none" stroke="#2e2e2e" stroke-width=".7"/><rect x="18.300" y="11.500" width="2.800" height="6.800" fill="#edd400" stroke="#6a5a00" stroke-width=".5"/><path d="M3.500 17L13.500 26.600M13.500 17L3.500 26.600" stroke="#6a0000" stroke-width="3.700" stroke-linecap="round"/><path d="M3.500 17L13.500 26.600M13.500 17L3.500 26.600" stroke="#e01b1b" stroke-width="2.400" stroke-linecap="round"/></svg>
<svg class="i" style="left:1525px;top:152px" width="10" height="8" viewBox="0 0 10 8"><path d="M1 1l3 3-3 3M6 1l3 3-3 3" stroke="#666" stroke-width="1.1" fill="none"/></svg>
<div style="position:absolute;left:0px;top:177px;width:321px;height:22px;background:#d9d9d9;border:1px solid #c4c4c4;box-sizing:border-box"></div>
<div class="t" style="left:6px;top:179.5px;height:20px;line-height:20px;font-size:15px;color:#000;transform:scaleX(0.9556);">Combo View</div>
<svg class="i" style="left:303px;top:183px" width="12" height="12" viewBox="0 0 12 12"><g fill="none" stroke="#333" stroke-width="1.6"><path d="M4 3.5V1.5h7v5H9"/><path d="M1 4.5h7v6H1z"/></g></svg>
<div style="position:absolute;left:0px;top:203px;width:66px;height:28px;background:#fff;border:1px solid #e3e3e3;border-bottom:none;box-sizing:border-box"></div>
<div style="position:absolute;left:66px;top:205px;width:82px;height:25px;background:#f0f0f0;border:1px solid #d9d9d9;box-sizing:border-box"></div>
<div class="t" style="left:14px;top:207.5px;height:20px;line-height:20px;font-size:15px;color:#000;transform:scaleX(0.8566);">Model</div>
<svg class="i" style="left:78.0px;top:207.0px" width="20" height="20" viewBox="0 0 30 30"><path d="M3 6.500L8.500 1.500 25.500 20 27.500 27.500 20 25z" fill="#3465a4" stroke="#1a3a66" stroke-width="1.200" stroke-linejoin="round"/><path d="M5.500 8.500L22.500 26.500M8 5.500L25 23" stroke="#204a87" stroke-width="1"/><path d="M20 25L25.500 20 27.500 27.500z" fill="#e9dcc0" stroke="#555" stroke-width=".6"/><path d="M25.200 25.200L27.500 27.500 26.700 24z" fill="#222"/></svg>
<div class="t" style="left:102px;top:208.0px;height:20px;line-height:20px;font-size:15px;color:#000;transform:scaleX(0.8867);">Tasks</div>
<div style="position:absolute;left:0px;top:230px;width:321px;height:360px;background:#fff;border:1px solid #e3e3e3;box-sizing:border-box"></div>
<div style="position:absolute;left:3px;top:232px;width:315px;height:356px;background:#fff;border:1px solid #9da3ab;border-top:none;box-sizing:border-box"></div>
<div style="position:absolute;left:217px;top:233px;width:1px;height:30px;background:#e5e5e5;"></div>
<div class="t" style="left:8px;top:238.5px;height:20px;line-height:20px;font-size:15px;color:#000;transform:scaleX(0.9754);">Labels &amp; Attributes</div>
<div class="t" style="left:222px;top:238.5px;height:20px;line-height:20px;font-size:15px;color:#000;transform:scaleX(0.9596);">Description</div>
<div class="t" style="left:7px;top:264.0px;height:20px;line-height:20px;font-size:15px;color:#000;transform:scaleX(0.9811);">Application</div>
<svg class="i" style="left:10px;top:292px" width="12" height="8" viewBox="0 0 12 8"><path d="M1 1l5 5 5-5" stroke="#333" stroke-width="2.2" fill="none"/></svg>
<svg class="i" style="left:31.0px;top:286.5px" width="20" height="20" viewBox="0 0 30 30"><rect x="2.900" y="1" width="24" height="27" fill="#ececec" stroke="#9a9a9a" stroke-width="1.200"/><circle cx="19" cy="9.500" r="5.600" fill="#e01b1b" stroke="#7a0000" stroke-width=".8"/><path d="M6.9 15.5L13.5 12L20.8 14.5L13.5 18.5z" fill="#729fcf" stroke="#0b1521" stroke-width="0.9" stroke-linejoin="round" /><path d="M6.9 15.5L13.5 18.5L13.5 25.7L6.9 22.5z" fill="#4a7dbd" stroke="#0b1521" stroke-width="0.9" stroke-linejoin="round" /><path d="M13.5 18.5L20.8 14.5L20.8 21.5L13.5 25.7z" fill="#204a87" stroke="#0b1521" stroke-width="0.9" stroke-linejoin="round" /></svg>
<div class="t" style="left:58px;top:286.5px;height:20px;line-height:20px;font-size:15px;color:#000;font-weight:bold;transform:scaleX(0.9511);">Unnamed</div>
<svg class="i" style="left:34px;top:316.5px" width="12" height="8" viewBox="0 0 12 8"><path d="M1 1l5 5 5-5" stroke="#333" stroke-width="2.2" fill="none"/></svg>
<svg class="i" style="left:55.0px;top:310.5px" width="20" height="20" viewBox="0 0 30 30"><g stroke="#0b1521" stroke-width=".9" stroke-linejoin="round"><path d="M5.500 10L13.800 3.100 20.200 6.400 11.600 12.500z" fill="#729fcf"/><path d="M5.500 10L11.600 12.500V18L17.700 20.200V27.200L5 23z" fill="#3465a4"/><path d="M11.600 12.500L20.200 6.400V12L11.600 18z" fill="#204a87"/><path d="M11.600 18L20.200 12 26 14.200 17.700 20.200z" fill="#729fcf"/><path d="M17.700 20.200L26 14.200V20.500L17.700 27.200z" fill="#204a87"/></g></svg>
<div class="t" style="left:82px;top:310.5px;height:20px;line-height:20px;font-size:15px;color:#000;transform:scaleX(0.9288);">Body001</div>
<svg class="i" style="left:60.5px;top:338.5px" width="8" height="12" viewBox="0 0 8 12"><path d="M1 1l5 5-5 5" stroke="#9c9c9c" stroke-width="2" fill="none"/></svg>
<svg class="i" style="left:79.0px;top:334.5px" width="20" height="20" viewBox="0 0 30 30"><path d="M15 1V13.600L28.500 14.800M15 13.600L2.700 24.900" fill="none" stroke="#8c8c8c" stroke-width="3" stroke-linejoin="round"/></svg>
<div class="t" style="left:106px;top:334.5px;height:20px;line-height:20px;font-size:15px;color:#8c8c8c;transform:scaleX(0.9532);">Origin001</div>
<svg class="i" style="left:60.5px;top:362.5px" width="8" height="12" viewBox="0 0 8 12"><path d="M1 1l5 5-5 5" stroke="#9c9c9c" stroke-width="2" fill="none"/></svg>
<svg class="i" style="left:79.0px;top:358.5px" width="20" height="20" viewBox="0 0 30 30"><path d="M14.900 16.300L28 21 14.900 27.600 1.800 22z" fill="#fafafa" stroke="#7a7a7a" stroke-width="3" stroke-linejoin="round"/><path d="M2.4 7.6L15.2 2.6L27.3 6.5L14.6 11.5z" fill="#b8b8b8" stroke="#6a6a6a" stroke-width="1" stroke-linejoin="round" /><path d="M2.4 7.6L14.6 11.5L14.6 19.8L2.4 16.5z" fill="#a0a0a0" stroke="#6a6a6a" stroke-width="1" stroke-linejoin="round" /><path d="M14.6 11.5L27.3 6.5L27.3 13.7L14.6 19.8z" fill="#8a8a8a" stroke="#6a6a6a" stroke-width="1" stroke-linejoin="round" /></svg>
<div class="t" style="left:106px;top:358.5px;height:20px;line-height:20px;font-size:15px;color:#8c8c8c;transform:scaleX(0.8613);">Pad</div>
<svg class="i" style="left:60.5px;top:386.5px" width="8" height="12" viewBox="0 0 8 12"><path d="M1 1l5 5-5 5" stroke="#9c9c9c" stroke-width="2" fill="none"/></svg>
<svg class="i" style="left:79.0px;top:382.5px" width="20" height="20" viewBox="0 0 30 30"><path d="M2 14.6L15.6 4.4L28.9 8.1L14.4 19.3z" fill="#b4b4b4" stroke="#6a6a6a" stroke-width="1" stroke-linejoin="round" /><path d="M2 14.6L14.4 19.3L14.4 27.2L2 22.2z" fill="#a2a2a2" stroke="#6a6a6a" stroke-width="1" stroke-linejoin="round" /><path d="M14.4 19.3L28.9 8.1L28.9 14.6L14.4 27.2z" fill="#8c8c8c" stroke="#6a6a6a" stroke-width="1" stroke-linejoin="round" /><path d="M8.8 12.7L16.3 7.4L23.7 9L15 15.2z" fill="#7c7c7c" stroke="#6a6a6a" stroke-width="0.8" stroke-linejoin="round" /></svg>
<div class="t" style="left:106px;top:382.5px;height:20px;line-height:20px;font-size:15px;color:#8c8c8c;transform:scaleX(0.9158);">Pocket</div>
<svg class="i" style="left:60.5px;top:410.5px" width="8" height="12" viewBox="0 0 8 12"><path d="M1 1l5 5-5 5" stroke="#9c9c9c" stroke-width="2" fill="none"/></svg>
<svg class="i" style="left:79.0px;top:406.5px" width="20" height="20" viewBox="0 0 30 30"><path d="M14.900 16.300L28 21 14.900 27.600 1.800 22z" fill="#fafafa" stroke="#7a7a7a" stroke-width="3" stroke-linejoin="round"/><path d="M2.4 7.6L15.2 2.6L27.3 6.5L14.6 11.5z" fill="#b8b8b8" stroke="#6a6a6a" stroke-width="1" stroke-linejoin="round" /><path d="M2.4 7.6L14.6 11.5L14.6 19.8L2.4 16.5z" fill="#a0a0a0" stroke="#6a6a6a" stroke-width="1" stroke-linejoin="round" /><path d="M14.6 11.5L27.3 6.5L27.3 13.7L14.6 19.8z" fill="#8a8a8a" stroke="#6a6a6a" stroke-width="1" stroke-linejoin="round" /></svg>
<div class="t" style="left:106px;top:406.5px;height:20px;line-height:20px;font-size:15px;color:#8c8c8c;transform:scaleX(0.8894);">Pad001</div>
<svg class="i" style="left:79.0px;top:430.5px" width="20" height="20" viewBox="0 0 30 30"><path d="M1.2 28.4L1.2 13.9L22 3.7L28.2 6.1L28.2 28.4z" fill="#a0a0a0" stroke="#6a6a6a" stroke-width="1" stroke-linejoin="round" /><path d="M1.200 23.500L12 20 19 28.400" stroke="#8a8a8a" stroke-width=".8" fill="none"/><path d="M1.9 13.05L5.748 10.8L9.3 11.850000000000001L5.452 13.950000000000001z" fill="#dedede" stroke="#6a6a6a" stroke-width="0.7" stroke-linejoin="round" /><path d="M1.9 13.05L5.452 13.950000000000001L5.452 18.3L1.9 17.25z" fill="#c4c4c4" stroke="#6a6a6a" stroke-width="0.7" stroke-linejoin="round" /><path d="M5.452 13.950000000000001L9.3 11.850000000000001L9.3 16.8L5.452 18.3z" fill="#a8a8a8" stroke="#6a6a6a" stroke-width="0.7" stroke-linejoin="round" /><path d="M10.5 13.719999999999999L14.712 11.5L18.6 12.536L14.388 14.607999999999999z" fill="#dedede" stroke="#6a6a6a" stroke-width="0.7" stroke-linejoin="round" /><path d="M10.5 13.719999999999999L14.388 14.607999999999999L14.388 18.9L10.5 17.863999999999997z" fill="#c4c4c4" stroke="#6a6a6a" stroke-width="0.7" stroke-linejoin="round" /><path d="M14.388 14.607999999999999L18.6 12.536L18.6 17.419999999999998L14.388 18.9z" fill="#a8a8a8" stroke="#6a6a6a" stroke-width="0.7" stroke-linejoin="round" /><path d="M19.8 13.719999999999999L24.012 11.5L27.9 12.536L23.688 14.607999999999999z" fill="#dedede" stroke="#6a6a6a" stroke-width="0.7" stroke-linejoin="round" /><path d="M19.8 13.719999999999999L23.688 14.607999999999999L23.688 18.9L19.8 17.863999999999997z" fill="#c4c4c4" stroke="#6a6a6a" stroke-width="0.7" stroke-linejoin="round" /><path d="M23.688 14.607999999999999L27.9 12.536L27.9 17.419999999999998L23.688 18.9z" fill="#a8a8a8" stroke="#6a6a6a" stroke-width="0.7" stroke-linejoin="round" /></svg>
<div class="t" style="left:106px;top:430.5px;height:20px;line-height:20px;font-size:15px;color:#8c8c8c;transform:scaleX(0.9216);">LinearPattern</div>
<svg class="i" style="left:60.5px;top:458.5px" width="8" height="12" viewBox="0 0 8 12"><path d="M1 1l5 5-5 5" stroke="#9c9c9c" stroke-width="2" fill="none"/></svg>
<svg class="i" style="left:79.0px;top:454.5px" width="20" height="20" viewBox="0 0 30 30"><path d="M14.900 16.300L28 21 14.900 27.600 1.800 22z" fill="#fafafa" stroke="#7a7a7a" stroke-width="3" stroke-linejoin="round"/><path d="M2.4 7.6L15.2 2.6L27.3 6.5L14.6 11.5z" fill="#b8b8b8" stroke="#6a6a6a" stroke-width="1" stroke-linejoin="round" /><path d="M2.4 7.6L14.6 11.5L14.6 19.8L2.4 16.5z" fill="#a0a0a0" stroke="#6a6a6a" stroke-width="1" stroke-linejoin="round" /><path d="M14.6 11.5L27.3 6.5L27.3 13.7L14.6 19.8z" fill="#8a8a8a" stroke="#6a6a6a" stroke-width="1" stroke-linejoin="round" /></svg>
<div class="t" style="left:106px;top:454.5px;height:20px;line-height:20px;font-size:15px;color:#8c8c8c;transform:scaleX(0.8894);">Pad002</div>
<svg class="i" style="left:79.0px;top:478.5px" width="20" height="20" viewBox="0 0 30 30"><path d="M1.2 28.4L1.2 13.9L22 3.7L28.2 6.1L28.2 28.4z" fill="#a0a0a0" stroke="#6a6a6a" stroke-width="1" stroke-linejoin="round" /><path d="M1.200 23.500L12 20 19 28.400" stroke="#8a8a8a" stroke-width=".8" fill="none"/><path d="M1.9 13.05L5.748 10.8L9.3 11.850000000000001L5.452 13.950000000000001z" fill="#dedede" stroke="#6a6a6a" stroke-width="0.7" stroke-linejoin="round" /><path d="M1.9 13.05L5.452 13.950000000000001L5.452 18.3L1.9 17.25z" fill="#c4c4c4" stroke="#6a6a6a" stroke-width="0.7" stroke-linejoin="round" /><path d="M5.452 13.950000000000001L9.3 11.850000000000001L9.3 16.8L5.452 18.3z" fill="#a8a8a8" stroke="#6a6a6a" stroke-width="0.7" stroke-linejoin="round" /><path d="M10.5 13.719999999999999L14.712 11.5L18.6 12.536L14.388 14.607999999999999z" fill="#dedede" stroke="#6a6a6a" stroke-width="0.7" stroke-linejoin="round" /><path d="M10.5 13.719999999999999L14.388 14.607999999999999L14.388 18.9L10.5 17.863999999999997z" fill="#c4c4c4" stroke="#6a6a6a" stroke-width="0.7" stroke-linejoin="round" /><path d="M14.388 14.607999999999999L18.6 12.536L18.6 17.419999999999998L14.388 18.9z" fill="#a8a8a8" stroke="#6a6a6a" stroke-width="0.7" stroke-linejoin="round" /><path d="M19.8 13.719999999999999L24.012 11.5L27.9 12.536L23.688 14.607999999999999z" fill="#dedede" stroke="#6a6a6a" stroke-width="0.7" stroke-linejoin="round" /><path d="M19.8 13.719999999999999L23.688 14.607999999999999L23.688 18.9L19.8 17.863999999999997z" fill="#c4c4c4" stroke="#6a6a6a" stroke-width="0.7" stroke-linejoin="round" /><path d="M23.688 14.607999999999999L27.9 12.536L27.9 17.419999999999998L23.688 18.9z" fill="#a8a8a8" stroke="#6a6a6a" stroke-width="0.7" stroke-linejoin="round" /></svg>
<div class="t" style="left:106px;top:478.5px;height:20px;line-height:20px;font-size:15px;color:#8c8c8c;transform:scaleX(0.9297);">LinearPattern001</div>
<svg class="i" style="left:60.5px;top:506.5px" width="8" height="12" viewBox="0 0 8 12"><path d="M1 1l5 5-5 5" stroke="#9c9c9c" stroke-width="2" fill="none"/></svg>
<svg class="i" style="left:79.0px;top:502.5px" width="20" height="20" viewBox="0 0 30 30"><path d="M2 14.6L15.6 4.4L28.9 8.1L14.4 19.3z" fill="#729fcf" stroke="#0b1521" stroke-width="0.8" stroke-linejoin="round" /><path d="M2 14.6L14.4 19.3L14.4 27.2L2 22.2z" fill="url(#gB)" stroke="#0b1521" stroke-width="0.8" stroke-linejoin="round" /><path d="M14.4 19.3L28.9 8.1L28.9 14.6L14.4 27.2z" fill="url(#gBd)" stroke="#0b1521" stroke-width="0.8" stroke-linejoin="round" /><path d="M8.8 12.7L16.3 7.4L23.7 9L15 15.2z" fill="#a40000" stroke="#280000" stroke-width="0.7" stroke-linejoin="round" /><path d="M16.300 7.400L15.500 12 23.700 9zM15.500 12L8.800 12.700 15 15.200z" fill="#ef2929" stroke="#280000" stroke-width=".4"/><rect x="14.500" y="14.500" width="14" height="15" rx="5.500" fill="#fff" stroke="#2fd02f" stroke-width="2.600"/></svg>
<div class="t" style="left:106px;top:502.5px;height:20px;line-height:20px;font-size:15px;color:#000;transform:scaleX(0.9169);">Pocket001</div>
<div style="position:absolute;left:4px;top:567px;width:313px;height:20px;background:#f0f0f0;"></div>
<div style="position:absolute;left:24px;top:568.5px;width:254px;height:17px;background:#cdcdcd;"></div>
<svg class="i" style="left:9px;top:572px" width="7" height="10" viewBox="0 0 7 10"><path d="M6 1L2 5l4 4" stroke="#444" stroke-width="1.6" fill="none"/></svg>
<svg class="i" style="left:302px;top:572px" width="7" height="10" viewBox="0 0 7 10"><path d="M1 1l4 4-4 4" stroke="#444" stroke-width="1.6" fill="none"/></svg>
<div style="position:absolute;left:0px;top:593px;width:321px;height:187px;background:#fff;border:1px solid #e3e3e3;box-sizing:border-box"></div>
<div style="position:absolute;left:5px;top:597px;width:308px;height:152px;background:#fff;border:1px solid #9da3ab;box-sizing:border-box"></div>
<div style="position:absolute;left:126px;top:599px;width:1px;height:28px;background:#e5e5e5;"></div>
<div class="t" style="left:11px;top:603.0px;height:20px;line-height:20px;font-size:15px;color:#000;transform:scaleX(0.9523);">Property</div>
<div class="t" style="left:131px;top:603.0px;height:20px;line-height:20px;font-size:15px;color:#000;transform:scaleX(0.9124);">Value</div>
<div style="position:absolute;left:5px;top:752px;width:52px;height:22px;background:#f0f0f0;border:1px solid #e3e3e3;border-top:none;box-sizing:border-box"></div>
<div style="position:absolute;left:57px;top:751px;width:58px;height:29px;background:#fff;border:1px solid #e3e3e3;border-top:none;box-sizing:border-box"></div>
<div class="t" style="left:16px;top:753.0px;height:20px;line-height:20px;font-size:15px;color:#000;transform:scaleX(0.8992);">View</div>
<div class="t" style="left:73px;top:754.5px;height:20px;line-height:20px;font-size:15px;color:#000;transform:scaleX(0.8836);">Data</div>
<div style="position:absolute;left:327px;top:176px;width:1209px;height:577px;background:linear-gradient(#333365 0%,#aaa9c5 100%)"></div>
<svg class="i" style="left:327px;top:176px" width="1209" height="577" viewBox="327 176 1209 577"><defs><linearGradient id="cyl" x1="0" x2="1"><stop offset="0" stop-color="#3b2905"/><stop offset=".1" stop-color="#48330a"/><stop offset=".35" stop-color="#7a5f22"/><stop offset=".52" stop-color="#8c6f2b"/><stop offset=".68" stop-color="#775c20"/><stop offset=".88" stop-color="#4c360b"/><stop offset="1" stop-color="#3b2905"/></linearGradient></defs><g stroke="#1c1a14" stroke-width="1.5" stroke-linejoin="round" fill="#4a3308"><path d="M726.4 255.5L551 357.7L904.9 561.6L1080.9 460.6z"/><path d="M551 357.7L904.9 561.6V686.3000000000001L551 482.4z"/><path d="M904.9 561.6L1080.9 460.6V585.3000000000001L904.9 686.3000000000001z"/><path d="M688.9 283.9V306.9A38 21.9 0 0 0 764.9 306.9V283.9z" fill="url(#cyl)"/><ellipse cx="726.9" cy="283.9" rx="38" ry="21.9"/><path d="M753.5 299.5V322.5" fill="none" stroke-width="1"/><path d="M602.0 335.0V358.0A38 21.9 0 0 0 678.0 358.0V335.0z" fill="url(#cyl)"/><ellipse cx="640.0" cy="335.0" rx="38" ry="21.9"/><path d="M666.6 350.6V373.6" fill="none" stroke-width="1"/><path d="M778.0 335.2V358.2A38 21.9 0 0 0 854.0 358.2V335.2z" fill="url(#cyl)"/><ellipse cx="816.0" cy="335.2" rx="38" ry="21.9"/><path d="M842.6 350.8V373.8" fill="none" stroke-width="1"/><path d="M691.1 386.3V409.3A38 21.9 0 0 0 767.1 409.3V386.3z" fill="url(#cyl)"/><ellipse cx="729.1" cy="386.3" rx="38" ry="21.9"/><path d="M755.7 401.9V424.9" fill="none" stroke-width="1"/><path d="M867.1 386.4V409.4A38 21.9 0 0 0 943.1 409.4V386.4z" fill="url(#cyl)"/><ellipse cx="905.1" cy="386.4" rx="38" ry="21.9"/><path d="M931.7 402.1V425.1" fill="none" stroke-width="1"/><path d="M780.2 437.5V460.5A38 21.9 0 0 0 856.2 460.5V437.5z" fill="url(#cyl)"/><ellipse cx="818.2" cy="437.5" rx="38" ry="21.9"/><path d="M844.8 453.2V476.2" fill="none" stroke-width="1"/><path d="M956.2 437.7V460.7A38 21.9 0 0 0 1032.2 460.7V437.7z" fill="url(#cyl)"/><ellipse cx="994.2" cy="437.7" rx="38" ry="21.9"/><path d="M1020.8 453.4V476.4" fill="none" stroke-width="1"/><path d="M869.3 488.8V511.8A38 21.9 0 0 0 945.3 511.8V488.8z" fill="url(#cyl)"/><ellipse cx="907.3" cy="488.8" rx="38" ry="21.9"/><path d="M933.9 504.5V527.5" fill="none" stroke-width="1"/></g></svg>
<svg class="i" style="left:1420px;top:178px" width="116" height="117" viewBox="1420 178 116 117"><g fill="#8d8cb0"><path d="M1470.200 191.400L1488.600 191.400 1479.400 181.600z"/><path d="M1470.200 278.200L1488.200 278.200 1479.400 287.400z"/><path d="M1435.800 226.100L1435.800 243.300 1426.900 234.700z"/><path d="M1522.200 225.400L1522.200 243.700 1532 234.600z"/><path d="M1464.0 186.6A51 51 0 0 0 1446.1 196.3L1444.5 194.4L1440.2 209.3L1453.5 205.1L1450.4 201.5A44.3 44.3 0 0 1 1465.9 193.0z"/><path d="M1493.8 186.6A51 51 0 0 1 1511.7 196.3L1513.3 194.4L1517.6 209.3L1504.3 205.1L1507.4 201.5A44.3 44.3 0 0 0 1491.9 193.0z"/></g><path d="M1497.800 270.500L1505.500 267.800 1513 270.500V280L1505.500 283 1497.800 280z" fill="#8887a8"/><path d="M1497.800 270.500L1505.500 273.200 1513 270.500 1505.500 267.800z" fill="#9695b4"/><path d="M1505.500 273.200V283L1513 280V270.500z" fill="#7f7ea0"/><path d="M1517 272.500h9.500l-4.750 5z" fill="#4b4a6c"/><path d="M1478.9 215L1500.5 225L1498.5 244.5L1478.9 258L1459.5 244.5L1457.5 225z" fill="#a5a4c3" stroke="#a5a4c3" stroke-width="19" stroke-linejoin="round"/><path d="M1478.9 215L1500.5 225L1498.5 244.5L1478.9 258L1459.5 244.5L1457.5 225z" fill="#d2d1e2" stroke="#d2d1e2" stroke-width="16.500" stroke-linejoin="round"/><path d="M1478.9 235.5V266.500M1478.9 235.5L1450.500 220.500M1478.9 235.5L1507.500 220.500" stroke="#9f9ebe" stroke-width="7.500" fill="none"/><circle cx="1478.9" cy="235.5" r="6.800" fill="#c6c5da" stroke="#b3b2cd" stroke-width=".8"/><path d="M1478.900 236V216" stroke="#a9a8c6" stroke-width="1.300"/><path d="M1478.900 236L1494 244" stroke="#b4b3cd" stroke-width=".8"/><g font-family="Liberation Sans, sans-serif" font-weight="bold" fill="#000" stroke="#000" stroke-width=".35"><text transform="matrix(.78 .36 -.8 .3 1479.5 217.500)" font-size="7.500" text-anchor="middle" y="2.500">TOP</text><text transform="matrix(.82 .5 0 1.1 1463 245)" font-size="6.400" text-anchor="middle" y="2.300">FRONT</text><text transform="matrix(.82 -.5 0 1.1 1496.500 244.500)" font-size="6.400" text-anchor="middle" y="2.300">RIGHT</text></g><path d="M1449.900 251.200L1443.700 225.400" stroke="#0a0aff" stroke-width="1.500"/><path d="M1449.900 251.200L1471.700 239" stroke="#7dff7d" stroke-width="1.100" opacity=".9"/><path d="M1449.900 251.200L1469.500 268.700" stroke="#e00010" stroke-width="1.700"/><g font-family="Liberation Sans, sans-serif" font-size="8"><text x="1442.500" y="213" fill="#1010ff">Z</text><text x="1480.500" y="278.500" fill="#c01030">X</text><text x="1481" y="234.500" fill="#a5e8b0">Y</text></g></svg>
<svg class="i" style="left:1500px;top:695px" width="36" height="45" viewBox="1500 695 36 45"><path d="M1509.200 723.700V706" stroke="#15159a" stroke-width="1.400"/><path d="M1509.200 702.500l-2 5h4z" fill="#15159a"/><path d="M1509.200 723.700L1518.500 718.700" stroke="#1a8a2a" stroke-width="1.400"/><path d="M1521.300 717.200l-4.800.6 1.800 3.200z" fill="#1a8a2a"/><path d="M1509.200 723.700L1522.500 731.500" stroke="#9a1a22" stroke-width="1.400"/><path d="M1526 733.500l-5.200-.8 1.900-3.300z" fill="#9a1a22"/><g font-family="Liberation Sans, sans-serif" font-size="7" fill="#222"><text x="1511" y="704.500">Z</text><text x="1523" y="717">Y</text><text x="1528" y="734">x</text></g></svg>
<div style="position:absolute;left:329px;top:753px;width:135px;height:26px;background:#f0f0f0;border:1px solid #d9d9d9;border-top:none;box-sizing:border-box"></div>
<div style="position:absolute;left:463px;top:753px;width:163px;height:29px;background:#fff;border:1px solid #e8e8e8;border-top:none;box-sizing:border-box"></div>
<svg class="i" style="left:341.0px;top:755.0px" width="20" height="20" viewBox="0 0 30 30"><path d="M1 1h16v6.5H8v5h6.5v6H8V28H1z" fill="#cb1b1b"/><path d="M1 1h3.5v27H1z" fill="#9b1010"/><path d="M28.65 17.12L28.65 20.48L26.07 20.62L25.28 22.52L27.02 24.44L24.64 26.82L22.72 25.08L20.82 25.87L20.68 28.45L17.32 28.45L17.18 25.87L15.28 25.08L13.36 26.82L10.98 24.44L12.72 22.52L11.93 20.62L9.35 20.48L9.35 17.12L11.93 16.98L12.72 15.08L10.98 13.16L13.36 10.78L15.28 12.52L17.18 11.73L17.32 9.15L20.68 9.15L20.82 11.73L22.72 12.52L24.64 10.78L27.02 13.16L25.28 15.08L26.07 16.98zM15.70 18.80a3.3 3.3 0 1 0 6.6 0a3.3 3.3 0 1 0 -6.6 0z" fill="#3d6eb0" fill-rule="evenodd" stroke="#27508c" stroke-width=".8"/></svg>
<div class="t" style="left:365px;top:756.0px;height:20px;line-height:20px;font-size:15px;color:#000;transform:scaleX(0.8957);">Start page</div>
<svg class="i" style="left:431.0px;top:757.0px" width="18" height="18" viewBox="0 0 30 30"><rect x="2" y="2" width="26" height="26" rx="3" fill="#c3c3c3" stroke="#a2a2a2" stroke-width="1.500"/><path d="M9.500 9.500l11 11M20.500 9.500l-11 11" stroke="#f4f4f4" stroke-width="4"/></svg>
<svg class="i" style="left:480.0px;top:757.0px" width="20" height="20" viewBox="0 0 30 30"><path d="M1 1h16v6.5H8v5h6.5v6H8V28H1z" fill="#cb1b1b"/><path d="M1 1h3.5v27H1z" fill="#9b1010"/><path d="M28.65 17.12L28.65 20.48L26.07 20.62L25.28 22.52L27.02 24.44L24.64 26.82L22.72 25.08L20.82 25.87L20.68 28.45L17.32 28.45L17.18 25.87L15.28 25.08L13.36 26.82L10.98 24.44L12.72 22.52L11.93 20.62L9.35 20.48L9.35 17.12L11.93 16.98L12.72 15.08L10.98 13.16L13.36 10.78L15.28 12.52L17.18 11.73L17.32 9.15L20.68 9.15L20.82 11.73L22.72 12.52L24.64 10.78L27.02 13.16L25.28 15.08L26.07 16.98zM15.70 18.80a3.3 3.3 0 1 0 6.6 0a3.3 3.3 0 1 0 -6.6 0z" fill="#3d6eb0" fill-rule="evenodd" stroke="#27508c" stroke-width=".8"/></svg>
<div class="t" style="left:504px;top:757.5px;height:20px;line-height:20px;font-size:15px;color:#000;transform:scaleX(0.9048);">Unnamed : 1*</div>
<svg class="i" style="left:592.0px;top:758.0px" width="18" height="18" viewBox="0 0 30 30"><rect x="2" y="2" width="26" height="26" rx="3" fill="#e8744f" stroke="#d04a2a" stroke-width="2"/><path d="M9.500 9.500l11 11M20.500 9.500l-11 11" stroke="#fff" stroke-width="4"/></svg>
<div class="t" style="left:3px;top:790.0px;height:20px;line-height:20px;font-size:15px;color:#000;transform:scaleX(0.8715);">Preselected: Unnamed.Body001.Pocket001.Edge2 (0.000000 mm, 23.700001 mm, 1.657724 mm)</div>
<div style="position:absolute;left:1286px;top:784px;width:1px;height:31px;background:#d0d0d0;"></div>
<svg class="i" style="left:1303.0px;top:789.0px" width="22" height="22" viewBox="0 0 30 30"><path d="M5 9C9 3.500 17 3.500 21 6" fill="none" stroke="#8a8a8a" stroke-width="3.600" stroke-linecap="round"/><path d="M9 24C13 26.500 21 26.500 25 21" fill="none" stroke="#8a8a8a" stroke-width="3.600" stroke-linecap="round"/><circle cx="23" cy="7" r="4.800" fill="#2a2a2a"/><circle cx="7" cy="23" r="4.800" fill="#2a2a2a"/></svg>
<div style="position:absolute;left:1324px;top:790px;width:43px;height:20px;overflow:hidden"><div class="t" style="left:0;top:0;height:20px;line-height:20px;font-size:15px;transform:scaleX(0.88)">Gesture</div></div>
<svg class="i" style="left:1368.5px;top:797.5px" width="9" height="5" viewBox="0 0 9 5"><path d="M0 0h9L4.5 5z" fill="#000"/></svg>
<div style="position:absolute;left:1387px;top:784px;width:1px;height:31px;background:#d0d0d0;"></div>
<div class="t" style="left:1393px;top:790.0px;height:20px;line-height:20px;font-size:15px;color:#000;transform:scaleX(0.8884);">115.25 mm x 54.88 mm</div>
</body></html>
